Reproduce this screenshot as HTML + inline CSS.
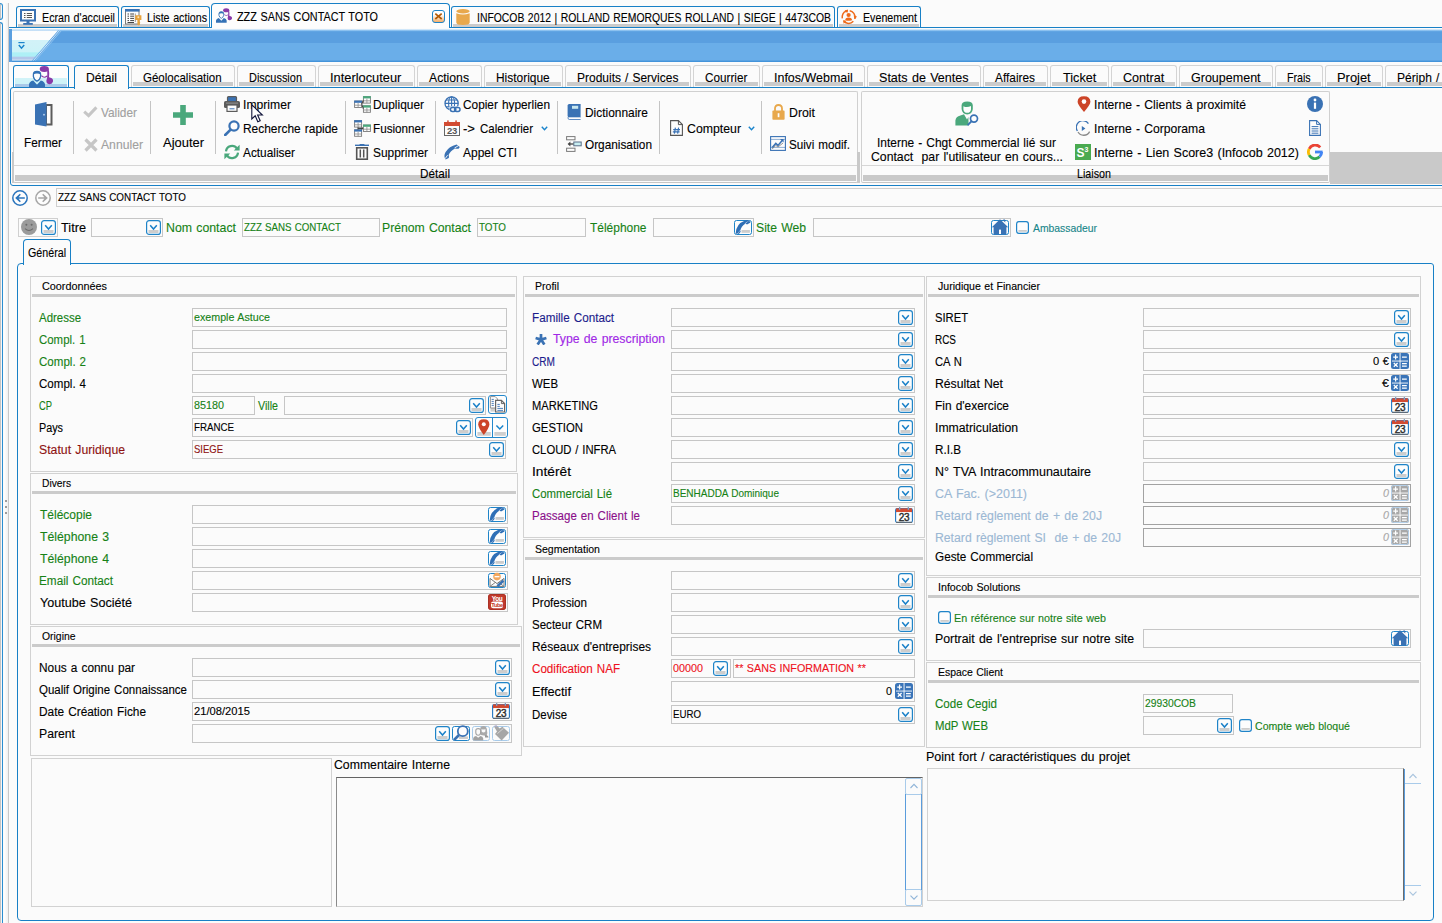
<!DOCTYPE html>
<html><head><meta charset="utf-8"><title>Infocob CRM</title>
<style>
html,body{margin:0;padding:0;overflow:hidden;}
html{width:1442px;height:923px;}
body{width:1442px;height:923px;overflow:hidden;background:#fbfbfb;position:relative;font-family:"Liberation Sans",sans-serif;}
body div,body span.t,body svg{position:absolute;box-sizing:border-box;}
span.t{white-space:pre;transform-origin:0 50%;-webkit-text-stroke:0.12px currentColor;}
.f{border:1px solid #c6c6c6;background:#fbfbfb;}
.fd{border:1px solid #a2a2a2;background:#fbfbfb;}
.g{border:1px solid #d2d2d2;}
.gb{background:#cbcbcb;height:3px;}
.dd{width:15px;height:15px;border:1px solid #2488cc;border-radius:3px;background:#fdfdfd;}
</style></head><body><div id="app" style="left:0;top:0;width:1442px;height:923px;overflow:hidden">
<div style="left:0px;top:3px;width:3px;height:17px;border:1px solid #2a8dd0;border-left:none;border-radius:0 3px 3px 0;background:linear-gradient(90deg,#c4c4c4 0,#c4c4c4 1px,#f4f6f8 1px);"></div>
<div style="left:0px;top:22px;width:3px;height:901px;border:1px solid #2a8dd0;border-left:none;border-bottom:none;border-radius:0 3px 0 0;background:linear-gradient(90deg,#c4c4c4 0,#c4c4c4 1px,#f4f6f8 1px);"></div>
<div style="left:4px;top:3px;width:5px;height:920px;background:linear-gradient(90deg,#ffffff,#f0f0f0);border-right:1px solid #c8c8c8;"></div>
<div style="left:5px;top:500px;width:2px;height:2px;background:#9c9c9c;"></div>
<div style="left:5px;top:506px;width:2px;height:2px;background:#9c9c9c;"></div>
<div style="left:5px;top:512px;width:2px;height:2px;background:#9c9c9c;"></div>
<div style="left:9px;top:27px;width:1433px;height:1px;background:#1880c6;"></div>
<div style="left:16px;top:6px;width:103px;height:21px;border:1px solid #1880c6;border-bottom:none;border-radius:3px 3px 0 0;background:#fbfbfb;"></div>
<div style="left:18px;top:24px;width:99px;height:3px;background:#cbcbcb;"></div>
<div style="left:121px;top:6px;width:89px;height:21px;border:1px solid #1880c6;border-bottom:none;border-radius:3px 3px 0 0;background:#fbfbfb;"></div>
<div style="left:123px;top:24px;width:85px;height:3px;background:#cbcbcb;"></div>
<div style="left:451px;top:6px;width:384px;height:21px;border:1px solid #1880c6;border-bottom:none;border-radius:3px 3px 0 0;background:#fbfbfb;"></div>
<div style="left:453px;top:24px;width:380px;height:3px;background:#cbcbcb;"></div>
<div style="left:837px;top:6px;width:84px;height:21px;border:1px solid #1880c6;border-bottom:none;border-radius:3px 3px 0 0;background:#fbfbfb;"></div>
<div style="left:839px;top:24px;width:80px;height:3px;background:#cbcbcb;"></div>
<div style="left:211px;top:3px;width:239px;height:25px;border:1px solid #1880c6;border-bottom:none;border-radius:4px 4px 0 0;background:#fdfdfd;"></div>
<span class="t" style="left:42px;top:8.5px;font-size:13px;line-height:17px;color:#000;transform:scaleX(0.8241);word-spacing:0.8px;">Ecran d'accueil</span>
<span class="t" style="left:147px;top:8.5px;font-size:13px;line-height:17px;color:#000;transform:scaleX(0.8210);word-spacing:0.8px;">Liste actions</span>
<span class="t" style="left:237px;top:7.5px;font-size:13px;line-height:17px;color:#000;transform:scaleX(0.8320);word-spacing:0.8px;">ZZZ SANS CONTACT TOTO</span>
<span class="t" style="left:477px;top:8.5px;font-size:13px;line-height:17px;color:#000;transform:scaleX(0.7993);word-spacing:0.8px;">INFOCOB 2012 | ROLLAND REMORQUES ROLLAND | SIEGE | 4473COB</span>
<span class="t" style="left:863px;top:8.5px;font-size:13px;line-height:17px;color:#000;transform:scaleX(0.8209);word-spacing:0.8px;">Evenement</span>
<div style="left:9px;top:29px;width:1433px;height:33px;background:linear-gradient(180deg,#eaf5fd 0px,#b4d8f6 1px,#84bdee 1.6px,#62a6e4 2.4px,#5a9fe0 3px,#5a9fe0 13.5px,#6aaee9 14.5px,#6aaee9 31px,#4a98dc 32px,#3d8fd8 33px);"></div>
<svg style="left:9px;top:29px" width="60" height="33" viewBox="0 0 60 33"><defs><linearGradient id="bt" x1="0" y1="0" x2="0" y2="1"><stop offset="0" stop-color="#fdfdfd"/><stop offset="0.3" stop-color="#fdfdfd"/><stop offset="0.32" stop-color="#d2f2f8"/><stop offset="0.72" stop-color="#cdf3f8"/><stop offset="0.74" stop-color="#aef0f6"/><stop offset="0.86" stop-color="#aef0f6"/><stop offset="0.88" stop-color="#b4c8ea"/><stop offset="0.95" stop-color="#b4c8ea"/><stop offset="1" stop-color="#e4f0fa"/></linearGradient></defs><rect x="0" y="0" width="3" height="33" fill="#5a9fe0"/><path d="M3 1.5 H49 L23 31.5 H3 Z" fill="url(#bt)"/><path d="M50.5 1.5 L24.5 31.5" stroke="#cfe6f8" stroke-width="1" fill="none"/><path d="M52.5 1.5 L26.5 31.5" stroke="#8ec2ee" stroke-width="1" fill="none"/></svg>
<div style="left:131px;top:65px;width:104px;height:24px;border:1px solid #d4d4d4;border-bottom:none;border-radius:3px 3px 0 0;"></div>
<div style="left:133px;top:82px;width:100px;height:4px;background:#cbcbcb;"></div>
<span class="t" style="left:142.8px;top:68.5px;font-size:13px;line-height:17px;color:#000;transform:scaleX(0.8850);word-spacing:0.8px;">Géolocalisation</span>
<div style="left:237px;top:65px;width:79px;height:24px;border:1px solid #d4d4d4;border-bottom:none;border-radius:3px 3px 0 0;"></div>
<div style="left:239px;top:82px;width:75px;height:4px;background:#cbcbcb;"></div>
<span class="t" style="left:249px;top:68.5px;font-size:13px;line-height:17px;color:#000;transform:scaleX(0.8429);word-spacing:0.8px;">Discussion</span>
<div style="left:318px;top:65px;width:97px;height:24px;border:1px solid #d4d4d4;border-bottom:none;border-radius:3px 3px 0 0;"></div>
<div style="left:320px;top:82px;width:93px;height:4px;background:#cbcbcb;"></div>
<span class="t" style="left:330.3px;top:68.5px;font-size:13px;line-height:17px;color:#000;transform:scaleX(0.9878);word-spacing:0.8px;">Interlocuteur</span>
<div style="left:417px;top:65px;width:65px;height:24px;border:1px solid #d4d4d4;border-bottom:none;border-radius:3px 3px 0 0;"></div>
<div style="left:419px;top:82px;width:61px;height:4px;background:#cbcbcb;"></div>
<span class="t" style="left:429.2px;top:68.5px;font-size:13px;line-height:17px;color:#000;transform:scaleX(0.9381);word-spacing:0.8px;">Actions</span>
<div style="left:484px;top:65px;width:79px;height:24px;border:1px solid #d4d4d4;border-bottom:none;border-radius:3px 3px 0 0;"></div>
<div style="left:486px;top:82px;width:75px;height:4px;background:#cbcbcb;"></div>
<span class="t" style="left:495.9px;top:68.5px;font-size:13px;line-height:17px;color:#000;transform:scaleX(0.9172);word-spacing:0.8px;">Historique</span>
<div style="left:565px;top:65px;width:126px;height:24px;border:1px solid #d4d4d4;border-bottom:none;border-radius:3px 3px 0 0;"></div>
<div style="left:567px;top:82px;width:122px;height:4px;background:#cbcbcb;"></div>
<span class="t" style="left:576.7px;top:68.5px;font-size:13px;line-height:17px;color:#000;transform:scaleX(0.9219);word-spacing:0.8px;">Produits / Services</span>
<div style="left:693px;top:65px;width:67px;height:24px;border:1px solid #d4d4d4;border-bottom:none;border-radius:3px 3px 0 0;"></div>
<div style="left:695px;top:82px;width:63px;height:4px;background:#cbcbcb;"></div>
<span class="t" style="left:704.9px;top:68.5px;font-size:13px;line-height:17px;color:#000;transform:scaleX(0.9027);word-spacing:0.8px;">Courrier</span>
<div style="left:762px;top:65px;width:103px;height:24px;border:1px solid #d4d4d4;border-bottom:none;border-radius:3px 3px 0 0;"></div>
<div style="left:764px;top:82px;width:99px;height:4px;background:#cbcbcb;"></div>
<span class="t" style="left:773.8px;top:68.5px;font-size:13px;line-height:17px;color:#000;transform:scaleX(0.9593);word-spacing:0.8px;">Infos/Webmail</span>
<div style="left:867px;top:65px;width:114px;height:24px;border:1px solid #d4d4d4;border-bottom:none;border-radius:3px 3px 0 0;"></div>
<div style="left:869px;top:82px;width:110px;height:4px;background:#cbcbcb;"></div>
<span class="t" style="left:878.8px;top:68.5px;font-size:13px;line-height:17px;color:#000;transform:scaleX(0.9668);word-spacing:0.8px;">Stats de Ventes</span>
<div style="left:983px;top:65px;width:65px;height:24px;border:1px solid #d4d4d4;border-bottom:none;border-radius:3px 3px 0 0;"></div>
<div style="left:985px;top:82px;width:61px;height:4px;background:#cbcbcb;"></div>
<span class="t" style="left:995px;top:68.5px;font-size:13px;line-height:17px;color:#000;transform:scaleX(0.9123);word-spacing:0.8px;">Affaires</span>
<div style="left:1050px;top:65px;width:59px;height:24px;border:1px solid #d4d4d4;border-bottom:none;border-radius:3px 3px 0 0;"></div>
<div style="left:1052px;top:82px;width:55px;height:4px;background:#cbcbcb;"></div>
<span class="t" style="left:1062.7px;top:68.5px;font-size:13px;line-height:17px;color:#000;transform:scaleX(0.9740);word-spacing:0.8px;">Ticket</span>
<div style="left:1111px;top:65px;width:66px;height:24px;border:1px solid #d4d4d4;border-bottom:none;border-radius:3px 3px 0 0;"></div>
<div style="left:1113px;top:82px;width:62px;height:4px;background:#cbcbcb;"></div>
<span class="t" style="left:1122.9px;top:68.5px;font-size:13px;line-height:17px;color:#000;transform:scaleX(0.9686);word-spacing:0.8px;">Contrat</span>
<div style="left:1179px;top:65px;width:94px;height:24px;border:1px solid #d4d4d4;border-bottom:none;border-radius:3px 3px 0 0;"></div>
<div style="left:1181px;top:82px;width:90px;height:4px;background:#cbcbcb;"></div>
<span class="t" style="left:1190.8px;top:68.5px;font-size:13px;line-height:17px;color:#000;transform:scaleX(0.9629);word-spacing:0.8px;">Groupement</span>
<div style="left:1275px;top:65px;width:48px;height:24px;border:1px solid #d4d4d4;border-bottom:none;border-radius:3px 3px 0 0;"></div>
<div style="left:1277px;top:82px;width:44px;height:4px;background:#cbcbcb;"></div>
<span class="t" style="left:1287px;top:68.5px;font-size:13px;line-height:17px;color:#000;transform:scaleX(0.8203);word-spacing:0.8px;">Frais</span>
<div style="left:1325px;top:65px;width:58px;height:24px;border:1px solid #d4d4d4;border-bottom:none;border-radius:3px 3px 0 0;"></div>
<div style="left:1327px;top:82px;width:54px;height:4px;background:#cbcbcb;"></div>
<span class="t" style="left:1336.6px;top:68.5px;font-size:13px;line-height:17px;color:#000;transform:scaleX(0.9921);word-spacing:0.8px;">Projet</span>
<div style="left:1385px;top:65px;width:76px;height:24px;border:1px solid #d4d4d4;border-bottom:none;border-radius:3px 3px 0 0;"></div>
<div style="left:1387px;top:82px;width:72px;height:4px;background:#cbcbcb;"></div>
<span class="t" style="left:1396.5px;top:68.5px;font-size:13px;line-height:17px;color:#000;transform:scaleX(0.9274);word-spacing:0.8px;">Périph /</span>
<div style="left:10px;top:87px;width:1440px;height:99px;border:1px solid #1880c6;border-radius:3px 0 0 3px;background:#fbfbfb;"></div>
<div style="left:13px;top:65px;width:56px;height:22px;border:1px solid #1880c6;border-bottom:none;border-radius:3px 3px 0 0;background:linear-gradient(180deg,#fdfdfd 0,#fdfdfd 12px,#d2f3f8 12px,#cdf3f8 17.5px,#aef0f6 18px,#a9c8e8 18.5px,#a9c8e8 20.5px,#fdfdfd 21px);box-shadow:inset 1px 1px 0 0 #fdfdfd,inset -1px 0 0 0 #fdfdfd;"></div>
<div style="left:74px;top:65px;width:55px;height:24px;border:1px solid #1880c6;border-bottom:none;border-radius:3px 3px 0 0;background:#fbfbfb;"></div>
<span class="t" style="left:86px;top:68.5px;font-size:13px;line-height:17px;color:#000;transform:scaleX(0.9323);word-spacing:0.8px;">Détail</span>
<div style="left:13px;top:91px;width:845px;height:92px;border:1px solid #d0d0d0;border-radius:2px;border-bottom-color:#c6c6c6;"></div>
<div style="left:861px;top:91px;width:469px;height:92px;border:1px solid #d0d0d0;border-radius:2px;border-bottom-color:#c6c6c6;"></div>
<div style="left:12px;top:152px;width:2px;height:31px;background:#c9c9c9;"></div>
<div style="left:857px;top:152px;width:3px;height:31px;background:#c9c9c9;"></div>
<div style="left:14px;top:165px;width:843px;height:1px;background:#d6d6d6;"></div>
<div style="left:862px;top:165px;width:467px;height:1px;background:#d6d6d6;"></div>
<div style="left:15px;top:175px;width:841px;height:6px;background:#c9c9c9;"></div>
<div style="left:863px;top:175px;width:465px;height:6px;background:#c9c9c9;"></div>
<div style="left:1330px;top:152px;width:112px;height:32px;background:#c9c9c9;"></div>
<span class="t" style="left:420px;top:164.5px;font-size:13px;line-height:17px;color:#000;transform:scaleX(0.9023);word-spacing:0.8px;">Détail</span>
<span class="t" style="left:1077px;top:164.5px;font-size:13px;line-height:17px;color:#000;transform:scaleX(0.8249);word-spacing:0.8px;">Liaison</span>
<div style="left:73px;top:101px;width:1px;height:53px;background:#c4c4c4;"></div>
<div style="left:150px;top:101px;width:1px;height:53px;background:#c4c4c4;"></div>
<div style="left:215px;top:101px;width:1px;height:53px;background:#c4c4c4;"></div>
<div style="left:345px;top:101px;width:1px;height:53px;background:#c4c4c4;"></div>
<div style="left:435px;top:101px;width:1px;height:53px;background:#c4c4c4;"></div>
<div style="left:557px;top:101px;width:1px;height:53px;background:#c4c4c4;"></div>
<div style="left:659px;top:101px;width:1px;height:53px;background:#c4c4c4;"></div>
<div style="left:761px;top:101px;width:1px;height:53px;background:#c4c4c4;"></div>
<span class="t" style="left:24px;top:133.5px;font-size:13px;line-height:17px;color:#000;transform:scaleX(0.9071);word-spacing:0.8px;">Fermer</span>
<span class="t" style="left:101px;top:103.5px;font-size:13px;line-height:17px;color:#a0a0a0;transform:scaleX(0.9110);word-spacing:0.8px;">Valider</span>
<span class="t" style="left:101px;top:135.5px;font-size:13px;line-height:17px;color:#a0a0a0;transform:scaleX(0.9369);word-spacing:0.8px;">Annuler</span>
<span class="t" style="left:163px;top:133.5px;font-size:13px;line-height:17px;color:#000;transform:scaleX(0.9951);word-spacing:0.8px;">Ajouter</span>
<span class="t" style="left:243px;top:95.5px;font-size:13px;line-height:17px;color:#000;transform:scaleX(0.9360);word-spacing:0.8px;">Imprimer</span>
<span class="t" style="left:243px;top:119.5px;font-size:13px;line-height:17px;color:#000;transform:scaleX(0.9183);word-spacing:0.8px;">Recherche rapide</span>
<span class="t" style="left:243px;top:143.5px;font-size:13px;line-height:17px;color:#000;transform:scaleX(0.9108);word-spacing:0.8px;">Actualiser</span>
<span class="t" style="left:373px;top:95.5px;font-size:13px;line-height:17px;color:#000;transform:scaleX(0.9161);word-spacing:0.8px;">Dupliquer</span>
<span class="t" style="left:373px;top:119.5px;font-size:13px;line-height:17px;color:#000;transform:scaleX(0.8992);word-spacing:0.8px;">Fusionner</span>
<span class="t" style="left:373px;top:143.5px;font-size:13px;line-height:17px;color:#000;transform:scaleX(0.9169);word-spacing:0.8px;">Supprimer</span>
<span class="t" style="left:463px;top:95.5px;font-size:13px;line-height:17px;color:#000;transform:scaleX(0.9110);word-spacing:0.8px;">Copier hyperlien</span>
<span class="t" style="left:463px;top:119.5px;font-size:13px;line-height:17px;color:#000;transform:scaleX(1.0066);word-spacing:0.8px;">-&gt;</span>
<span class="t" style="left:480.3px;top:119.5px;font-size:13px;line-height:17px;color:#000;transform:scaleX(0.8833);word-spacing:0.8px;">Calendrier</span>
<span class="t" style="left:463px;top:143.5px;font-size:13px;line-height:17px;color:#000;transform:scaleX(0.9213);word-spacing:0.8px;">Appel CTI</span>
<span class="t" style="left:585px;top:103.5px;font-size:13px;line-height:17px;color:#000;transform:scaleX(0.9174);word-spacing:0.8px;">Dictionnaire</span>
<span class="t" style="left:585px;top:135.5px;font-size:13px;line-height:17px;color:#000;transform:scaleX(0.9087);word-spacing:0.8px;">Organisation</span>
<span class="t" style="left:687px;top:119.5px;font-size:13px;line-height:17px;color:#000;transform:scaleX(0.9458);word-spacing:0.8px;">Compteur</span>
<span class="t" style="left:789px;top:103.5px;font-size:13px;line-height:17px;color:#000;transform:scaleX(0.9471);word-spacing:0.8px;">Droit</span>
<span class="t" style="left:789px;top:135.5px;font-size:13px;line-height:17px;color:#000;transform:scaleX(0.8970);word-spacing:0.8px;">Suivi modif.</span>
<span class="t" style="left:877px;top:133.5px;font-size:13px;line-height:17px;color:#000;transform:scaleX(0.9191);word-spacing:0.8px;">Interne - Chgt Commercial lié sur</span>
<span class="t" style="left:871px;top:147.5px;font-size:13px;line-height:17px;color:#000;transform:scaleX(0.9422);word-spacing:0.8px;">Contact  par l'utilisateur en cours...</span>
<span class="t" style="left:1094px;top:95.5px;font-size:13px;line-height:17px;color:#000;transform:scaleX(0.9372);word-spacing:0.8px;">Interne - Clients à proximité</span>
<span class="t" style="left:1094px;top:119.5px;font-size:13px;line-height:17px;color:#000;transform:scaleX(0.9353);word-spacing:0.8px;">Interne - Corporama</span>
<span class="t" style="left:1094px;top:143.5px;font-size:13px;line-height:17px;color:#000;transform:scaleX(0.9629);word-spacing:0.8px;">Interne - Lien Score3 (Infocob 2012)</span>
<svg style="left:541px;top:126px" width="7" height="5" viewBox="0 0 7 5"><path d="M0.8 0.8 L3.5 3.8 L6.2 0.8" fill="none" stroke="#1a84cc" stroke-width="1.4"/></svg>
<svg style="left:748px;top:126px" width="7" height="5" viewBox="0 0 7 5"><path d="M0.8 0.8 L3.5 3.8 L6.2 0.8" fill="none" stroke="#1a84cc" stroke-width="1.4"/></svg>
<div style="left:56px;top:188px;width:1390px;height:19px;border:1px solid #cfcfcf;"></div>
<span class="t" style="left:58px;top:189.5px;font-size:11px;line-height:15px;color:#000;transform:scaleX(0.8957);word-spacing:0.5px;">ZZZ SANS CONTACT TOTO</span>
<div style="left:18px;top:218px;width:40px;height:19px;border:1px solid #d0d0d0;"></div>
<svg style="left:41px;top:220px" width="15" height="15" viewBox="0 0 15 15"><rect x="0.6" y="0.6" width="13.8" height="13.8" rx="2.5" fill="#fdfdfd" stroke="#1f84c8" stroke-width="1.2"/><rect x="2.5" y="10" width="10" height="3" fill="#cdcdcd"/><path d="M4.2 5.2 L7.5 9 L10.8 5.2" fill="none" stroke="#1a80c8" stroke-width="1.5"/></svg>
<span class="t" style="left:61px;top:218.5px;font-size:13px;line-height:17px;color:#000;transform:scaleX(0.9798);word-spacing:0.8px;">Titre</span>
<div class="f" style="left:91px;top:218px;width:72px;height:19px;"></div>
<svg style="left:146px;top:220px" width="15" height="15" viewBox="0 0 15 15"><rect x="0.6" y="0.6" width="13.8" height="13.8" rx="2.5" fill="#fdfdfd" stroke="#1f84c8" stroke-width="1.2"/><rect x="2.5" y="10" width="10" height="3" fill="#cdcdcd"/><path d="M4.2 5.2 L7.5 9 L10.8 5.2" fill="none" stroke="#1a80c8" stroke-width="1.5"/></svg>
<span class="t" style="left:166px;top:218.5px;font-size:13px;line-height:17px;color:#168216;transform:scaleX(0.9487);word-spacing:0.8px;">Nom contact</span>
<div class="f" style="left:242px;top:218px;width:138px;height:19px"></div>
<span class="t" style="left:244px;top:219.5px;font-size:11px;line-height:15px;color:#168216;transform:scaleX(0.8851);word-spacing:0.5px;">ZZZ SANS CONTACT</span>
<span class="t" style="left:382px;top:218.5px;font-size:13px;line-height:17px;color:#168216;transform:scaleX(0.9393);word-spacing:0.8px;">Prénom Contact</span>
<div class="f" style="left:477px;top:218px;width:109px;height:19px"></div>
<span class="t" style="left:479px;top:219.5px;font-size:11px;line-height:15px;color:#168216;transform:scaleX(0.8953);word-spacing:0.5px;">TOTO</span>
<span class="t" style="left:590px;top:218.5px;font-size:13px;line-height:17px;color:#168216;transform:scaleX(0.9192);word-spacing:0.8px;">Téléphone</span>
<div class="f" style="left:653px;top:218px;width:101px;height:19px"></div>
<svg style="left:734px;top:219px" width="18" height="16" viewBox="0 0 18 16"><rect x="0.5" y="1.5" width="17" height="14" rx="2" fill="#fdfdfd" stroke="#1f84c8"/><rect x="7.5" y="11" width="8.4" height="2.8" fill="#cdcdcd"/><path d="M1.6 14.6 Q2 5 11 1.6 Q13.2 0.4 14.8 1.2 L16.6 3.4 L13 5.6 L11.6 4.6 Q7 7.4 6.2 12 L6.8 12.8 L4.6 15.2 Z" fill="#2f6fb6"/><path d="M10.8 4.8 L14.4 2" stroke="#fdfdfd" stroke-width="0.7" stroke-dasharray="1.2 0.6"/><path d="M3.4 15 L6 11.6" stroke="#fdfdfd" stroke-width="0.7" stroke-dasharray="1.2 0.6"/></svg>
<span class="t" style="left:756px;top:218.5px;font-size:13px;line-height:17px;color:#168216;transform:scaleX(0.9378);word-spacing:0.8px;">Site Web</span>
<div class="f" style="left:813px;top:218px;width:198px;height:19px"></div>
<svg style="left:991px;top:219px" width="18" height="16" viewBox="0 0 18 16"><rect x="0.5" y="1.5" width="17" height="14" rx="2" fill="#fdfdfd" stroke="#1f84c8"/><path d="M9 0.2 L0.8 8.2 H2.6 V15.4 H15.4 V8.2 H17.2 Z" fill="#3a72b4"/><path d="M12.2 0.4 H14 L14.4 3.6 L12.6 2 Z" fill="#3a72b4"/><rect x="8" y="10.6" width="2" height="4.4" fill="#fdfdfd"/></svg>
<svg style="left:1016px;top:221px" width="13" height="13" viewBox="0 0 13 13"><rect x="0.6" y="0.6" width="11.8" height="11.8" rx="2.3" fill="#fdfdfd" stroke="#1f84c8" stroke-width="1.2"/><rect x="2.4" y="9" width="8.4" height="1.8" fill="#cdcdcd"/></svg>
<span class="t" style="left:1033px;top:220.5px;font-size:11px;line-height:15px;color:#17868a;transform:scaleX(0.9425);word-spacing:0.5px;">Ambassadeur</span>
<div style="left:17px;top:263px;width:1417px;height:658px;border:1px solid #1880c6;border-radius:4px 3px 4px 4px;"></div>
<div style="left:23px;top:239px;width:48px;height:26px;border:1px solid #1880c6;border-bottom:none;border-radius:4px 4px 0 0;background:#fbfbfb;"></div>
<span class="t" style="left:28px;top:245.0px;font-size:12px;line-height:16px;color:#000;transform:scaleX(0.8902);word-spacing:0.8px;">Général</span>
<div class="g" style="left:30px;top:276px;width:487px;height:196px"></div>
<div class="gb" style="left:32px;top:294px;width:483px"></div>
<span class="t" style="left:42px;top:278.5px;font-size:11px;line-height:15px;color:#000;transform:scaleX(0.9835);word-spacing:0.5px;">Coordonnées</span>
<span class="t" style="left:39px;top:310.0px;font-size:12px;line-height:16px;color:#168216;transform:scaleX(0.9542);word-spacing:0.8px;">Adresse</span>
<span class="t" style="left:39px;top:332.0px;font-size:12px;line-height:16px;color:#168216;transform:scaleX(0.9526);word-spacing:0.8px;">Compl. 1</span>
<span class="t" style="left:39px;top:354.0px;font-size:12px;line-height:16px;color:#168216;transform:scaleX(0.9628);word-spacing:0.8px;">Compl. 2</span>
<span class="t" style="left:39px;top:376.0px;font-size:12px;line-height:16px;color:#000;transform:scaleX(0.9628);word-spacing:0.8px;">Compl. 4</span>
<span class="t" style="left:39px;top:398.0px;font-size:12px;line-height:16px;color:#168216;transform:scaleX(0.7798);word-spacing:0.8px;">CP</span>
<span class="t" style="left:39px;top:420.0px;font-size:12px;line-height:16px;color:#000;transform:scaleX(0.8998);word-spacing:0.8px;">Pays</span>
<span class="t" style="left:39px;top:442.0px;font-size:12px;line-height:16px;color:#8e1212;transform:scaleX(1.0219);word-spacing:0.8px;">Statut Juridique</span>
<div class="f" style="left:192px;top:308px;width:315px;height:19px"></div>
<div class="f" style="left:192px;top:330px;width:315px;height:19px"></div>
<div class="f" style="left:192px;top:352px;width:315px;height:19px"></div>
<div class="f" style="left:192px;top:374px;width:315px;height:19px"></div>
<span class="t" style="left:194px;top:309.5px;font-size:11px;line-height:15px;color:#168216;transform:scaleX(0.9718);word-spacing:0.5px;">exemple Astuce</span>
<div class="f" style="left:192px;top:396px;width:63px;height:19px"></div>
<span class="t" style="left:194px;top:397.5px;font-size:11px;line-height:15px;color:#168216;transform:scaleX(0.9796);word-spacing:0.5px;">85180</span>
<span class="t" style="left:257.5px;top:398.0px;font-size:12px;line-height:16px;color:#168216;transform:scaleX(0.8901);word-spacing:0.8px;">Ville</span>
<div class="f" style="left:284px;top:396px;width:202px;height:19px"></div>
<svg style="left:469px;top:398px" width="15" height="15" viewBox="0 0 15 15"><rect x="0.6" y="0.6" width="13.8" height="13.8" rx="2.5" fill="#fdfdfd" stroke="#1f84c8" stroke-width="1.2"/><rect x="2.5" y="10" width="10" height="3" fill="#cdcdcd"/><path d="M4.2 5.2 L7.5 9 L10.8 5.2" fill="none" stroke="#1a80c8" stroke-width="1.5"/></svg>
<div class="f" style="left:192px;top:418px;width:281px;height:19px"></div>
<span class="t" style="left:194px;top:419.5px;font-size:11px;line-height:15px;color:#000;transform:scaleX(0.8846);word-spacing:0.5px;">FRANCE</span>
<svg style="left:456px;top:420px" width="15" height="15" viewBox="0 0 15 15"><rect x="0.6" y="0.6" width="13.8" height="13.8" rx="2.5" fill="#fdfdfd" stroke="#1f84c8" stroke-width="1.2"/><rect x="2.5" y="10" width="10" height="3" fill="#cdcdcd"/><path d="M4.2 5.2 L7.5 9 L10.8 5.2" fill="none" stroke="#1a80c8" stroke-width="1.5"/></svg>
<div class="f" style="left:192px;top:440px;width:314px;height:19px"></div>
<span class="t" style="left:194px;top:441.5px;font-size:11px;line-height:15px;color:#8e1212;transform:scaleX(0.8617);word-spacing:0.5px;">SIEGE</span>
<svg style="left:489px;top:442px" width="15" height="15" viewBox="0 0 15 15"><rect x="0.6" y="0.6" width="13.8" height="13.8" rx="2.5" fill="#fdfdfd" stroke="#1f84c8" stroke-width="1.2"/><rect x="2.5" y="10" width="10" height="3" fill="#cdcdcd"/><path d="M4.2 5.2 L7.5 9 L10.8 5.2" fill="none" stroke="#1a80c8" stroke-width="1.5"/></svg>
<div class="g" style="left:30px;top:473px;width:488px;height:152px"></div>
<div class="gb" style="left:32px;top:491px;width:484px"></div>
<span class="t" style="left:42px;top:475.5px;font-size:11px;line-height:15px;color:#000;transform:scaleX(0.9308);word-spacing:0.5px;">Divers</span>
<span class="t" style="left:40px;top:507.0px;font-size:12px;line-height:16px;color:#168216;transform:scaleX(0.9994);word-spacing:0.8px;">Télécopie</span>
<div class="f" style="left:192px;top:505px;width:316px;height:19px"></div>
<span class="t" style="left:40px;top:529.0px;font-size:12px;line-height:16px;color:#168216;transform:scaleX(1.0222);word-spacing:0.8px;">Téléphone 3</span>
<div class="f" style="left:192px;top:527px;width:316px;height:19px"></div>
<span class="t" style="left:40px;top:551.0px;font-size:12px;line-height:16px;color:#168216;transform:scaleX(1.0222);word-spacing:0.8px;">Téléphone 4</span>
<div class="f" style="left:192px;top:549px;width:316px;height:19px"></div>
<span class="t" style="left:39.3px;top:573.0px;font-size:12px;line-height:16px;color:#168216;transform:scaleX(0.9803);word-spacing:0.8px;">Email Contact</span>
<div class="f" style="left:192px;top:571px;width:316px;height:19px"></div>
<span class="t" style="left:40px;top:595.0px;font-size:12px;line-height:16px;color:#000;transform:scaleX(1.0486);word-spacing:0.8px;">Youtube Société</span>
<div class="f" style="left:192px;top:593px;width:316px;height:19px"></div>
<svg style="left:488px;top:506px" width="18" height="16" viewBox="0 0 18 16"><rect x="0.5" y="1.5" width="17" height="14" rx="2" fill="#fdfdfd" stroke="#1f84c8"/><rect x="7.5" y="11" width="8.4" height="2.8" fill="#cdcdcd"/><path d="M1.6 14.6 Q2 5 11 1.6 Q13.2 0.4 14.8 1.2 L16.6 3.4 L13 5.6 L11.6 4.6 Q7 7.4 6.2 12 L6.8 12.8 L4.6 15.2 Z" fill="#2f6fb6"/><path d="M10.8 4.8 L14.4 2" stroke="#fdfdfd" stroke-width="0.7" stroke-dasharray="1.2 0.6"/><path d="M3.4 15 L6 11.6" stroke="#fdfdfd" stroke-width="0.7" stroke-dasharray="1.2 0.6"/></svg>
<svg style="left:488px;top:528px" width="18" height="16" viewBox="0 0 18 16"><rect x="0.5" y="1.5" width="17" height="14" rx="2" fill="#fdfdfd" stroke="#1f84c8"/><rect x="7.5" y="11" width="8.4" height="2.8" fill="#cdcdcd"/><path d="M1.6 14.6 Q2 5 11 1.6 Q13.2 0.4 14.8 1.2 L16.6 3.4 L13 5.6 L11.6 4.6 Q7 7.4 6.2 12 L6.8 12.8 L4.6 15.2 Z" fill="#2f6fb6"/><path d="M10.8 4.8 L14.4 2" stroke="#fdfdfd" stroke-width="0.7" stroke-dasharray="1.2 0.6"/><path d="M3.4 15 L6 11.6" stroke="#fdfdfd" stroke-width="0.7" stroke-dasharray="1.2 0.6"/></svg>
<svg style="left:488px;top:550px" width="18" height="16" viewBox="0 0 18 16"><rect x="0.5" y="1.5" width="17" height="14" rx="2" fill="#fdfdfd" stroke="#1f84c8"/><rect x="7.5" y="11" width="8.4" height="2.8" fill="#cdcdcd"/><path d="M1.6 14.6 Q2 5 11 1.6 Q13.2 0.4 14.8 1.2 L16.6 3.4 L13 5.6 L11.6 4.6 Q7 7.4 6.2 12 L6.8 12.8 L4.6 15.2 Z" fill="#2f6fb6"/><path d="M10.8 4.8 L14.4 2" stroke="#fdfdfd" stroke-width="0.7" stroke-dasharray="1.2 0.6"/><path d="M3.4 15 L6 11.6" stroke="#fdfdfd" stroke-width="0.7" stroke-dasharray="1.2 0.6"/></svg>
<div class="g" style="left:30px;top:626px;width:492px;height:130px"></div>
<div class="gb" style="left:32px;top:644px;width:488px"></div>
<span class="t" style="left:42px;top:628.5px;font-size:11px;line-height:15px;color:#000;transform:scaleX(0.9445);word-spacing:0.5px;">Origine</span>
<span class="t" style="left:39px;top:660.0px;font-size:12px;line-height:16px;color:#000;transform:scaleX(0.9886);word-spacing:0.8px;">Nous a connu par</span>
<div class="f" style="left:192px;top:658px;width:320px;height:19px"></div>
<span class="t" style="left:39px;top:682.0px;font-size:12px;line-height:16px;color:#000;transform:scaleX(0.9590);word-spacing:0.8px;">Qualif Origine Connaissance</span>
<div class="f" style="left:192px;top:680px;width:320px;height:19px"></div>
<span class="t" style="left:39px;top:704.0px;font-size:12px;line-height:16px;color:#000;transform:scaleX(0.9880);word-spacing:0.8px;">Date Création Fiche</span>
<div class="f" style="left:192px;top:702px;width:320px;height:19px"></div>
<span class="t" style="left:39px;top:726.0px;font-size:12px;line-height:16px;color:#000;transform:scaleX(1.0186);word-spacing:0.8px;">Parent</span>
<div class="f" style="left:192px;top:724px;width:320px;height:19px"></div>
<svg style="left:495px;top:660px" width="15" height="15" viewBox="0 0 15 15"><rect x="0.6" y="0.6" width="13.8" height="13.8" rx="2.5" fill="#fdfdfd" stroke="#1f84c8" stroke-width="1.2"/><rect x="2.5" y="10" width="10" height="3" fill="#cdcdcd"/><path d="M4.2 5.2 L7.5 9 L10.8 5.2" fill="none" stroke="#1a80c8" stroke-width="1.5"/></svg>
<svg style="left:495px;top:682px" width="15" height="15" viewBox="0 0 15 15"><rect x="0.6" y="0.6" width="13.8" height="13.8" rx="2.5" fill="#fdfdfd" stroke="#1f84c8" stroke-width="1.2"/><rect x="2.5" y="10" width="10" height="3" fill="#cdcdcd"/><path d="M4.2 5.2 L7.5 9 L10.8 5.2" fill="none" stroke="#1a80c8" stroke-width="1.5"/></svg>
<span class="t" style="left:194px;top:703.5px;font-size:11px;line-height:15px;color:#000;transform:scaleX(1.0159);word-spacing:0.5px;">21/08/2015</span>
<svg style="left:492px;top:703px" width="18" height="16" viewBox="0 0 18 16"><rect x="0.7" y="1.7" width="16.6" height="13.6" rx="1.5" fill="#fdfdfd" stroke="#2b7cc4" stroke-width="1.4"/><rect x="1" y="1.4" width="16" height="3.8" fill="#d24b32"/><rect x="4" y="0" width="1.3" height="3" fill="#7f9fc4"/><rect x="12.7" y="0" width="1.3" height="3" fill="#7f9fc4"/><rect x="1.4" y="5.2" width="15.2" height="9.6" fill="#fdfdfd"/><rect x="1" y="14.8" width="16" height="1" fill="#666"/><text x="9" y="14" font-family="Liberation Sans" font-size="10" fill="#2c2c2c" stroke="#2c2c2c" stroke-width="0.4" text-anchor="middle" letter-spacing="-0.3">23</text></svg>
<svg style="left:435px;top:726px" width="15" height="15" viewBox="0 0 15 15"><rect x="0.6" y="0.6" width="13.8" height="13.8" rx="2.5" fill="#fdfdfd" stroke="#1f84c8" stroke-width="1.2"/><rect x="2.5" y="10" width="10" height="3" fill="#cdcdcd"/><path d="M4.2 5.2 L7.5 9 L10.8 5.2" fill="none" stroke="#1a80c8" stroke-width="1.5"/></svg>
<div style="left:31px;top:758px;width:301px;height:149px;border:1px solid #d2d2d2;"></div>
<span class="t" style="left:334px;top:757.0px;font-size:12px;line-height:16px;color:#000;transform:scaleX(1.0220);word-spacing:0.8px;">Commentaire Interne</span>
<div style="left:336px;top:777px;width:587px;height:130px;border:1px solid #d2d2d2;border-top:1px solid #646464;border-left:1px solid #8a8a8a;"></div>
<div class="g" style="left:523px;top:276px;width:402px;height:262px"></div>
<div class="gb" style="left:525px;top:294px;width:398px"></div>
<span class="t" style="left:535px;top:278.5px;font-size:11px;line-height:15px;color:#000;transform:scaleX(0.9576);word-spacing:0.5px;">Profil</span>
<span class="t" style="left:532px;top:310.0px;font-size:12px;line-height:16px;color:#1c1c8c;transform:scaleX(0.9743);word-spacing:0.8px;">Famille Contact</span>
<div class="f" style="left:671px;top:308px;width:244px;height:19px"></div>
<svg style="left:898px;top:310px" width="15" height="15" viewBox="0 0 15 15"><rect x="0.6" y="0.6" width="13.8" height="13.8" rx="2.5" fill="#fdfdfd" stroke="#1f84c8" stroke-width="1.2"/><rect x="2.5" y="10" width="10" height="3" fill="#cdcdcd"/><path d="M4.2 5.2 L7.5 9 L10.8 5.2" fill="none" stroke="#1a80c8" stroke-width="1.5"/></svg>
<span class="t" style="left:553px;top:331.0px;font-size:12px;line-height:16px;color:#a028e6;transform:scaleX(1.0215);word-spacing:0.8px;">Type de prescription</span>
<div class="f" style="left:671px;top:330px;width:244px;height:19px"></div>
<svg style="left:898px;top:332px" width="15" height="15" viewBox="0 0 15 15"><rect x="0.6" y="0.6" width="13.8" height="13.8" rx="2.5" fill="#fdfdfd" stroke="#1f84c8" stroke-width="1.2"/><rect x="2.5" y="10" width="10" height="3" fill="#cdcdcd"/><path d="M4.2 5.2 L7.5 9 L10.8 5.2" fill="none" stroke="#1a80c8" stroke-width="1.5"/></svg>
<span class="t" style="left:532px;top:354.0px;font-size:12px;line-height:16px;color:#1c1c8c;transform:scaleX(0.8411);word-spacing:0.8px;">CRM</span>
<div class="f" style="left:671px;top:352px;width:244px;height:19px"></div>
<svg style="left:898px;top:354px" width="15" height="15" viewBox="0 0 15 15"><rect x="0.6" y="0.6" width="13.8" height="13.8" rx="2.5" fill="#fdfdfd" stroke="#1f84c8" stroke-width="1.2"/><rect x="2.5" y="10" width="10" height="3" fill="#cdcdcd"/><path d="M4.2 5.2 L7.5 9 L10.8 5.2" fill="none" stroke="#1a80c8" stroke-width="1.5"/></svg>
<span class="t" style="left:532px;top:376.0px;font-size:12px;line-height:16px;color:#000;transform:scaleX(0.9514);word-spacing:0.8px;">WEB</span>
<div class="f" style="left:671px;top:374px;width:244px;height:19px"></div>
<svg style="left:898px;top:376px" width="15" height="15" viewBox="0 0 15 15"><rect x="0.6" y="0.6" width="13.8" height="13.8" rx="2.5" fill="#fdfdfd" stroke="#1f84c8" stroke-width="1.2"/><rect x="2.5" y="10" width="10" height="3" fill="#cdcdcd"/><path d="M4.2 5.2 L7.5 9 L10.8 5.2" fill="none" stroke="#1a80c8" stroke-width="1.5"/></svg>
<span class="t" style="left:532px;top:398.0px;font-size:12px;line-height:16px;color:#000;transform:scaleX(0.9253);word-spacing:0.8px;">MARKETING</span>
<div class="f" style="left:671px;top:396px;width:244px;height:19px"></div>
<svg style="left:898px;top:398px" width="15" height="15" viewBox="0 0 15 15"><rect x="0.6" y="0.6" width="13.8" height="13.8" rx="2.5" fill="#fdfdfd" stroke="#1f84c8" stroke-width="1.2"/><rect x="2.5" y="10" width="10" height="3" fill="#cdcdcd"/><path d="M4.2 5.2 L7.5 9 L10.8 5.2" fill="none" stroke="#1a80c8" stroke-width="1.5"/></svg>
<span class="t" style="left:532px;top:420.0px;font-size:12px;line-height:16px;color:#000;transform:scaleX(0.9447);word-spacing:0.8px;">GESTION</span>
<div class="f" style="left:671px;top:418px;width:244px;height:19px"></div>
<svg style="left:898px;top:420px" width="15" height="15" viewBox="0 0 15 15"><rect x="0.6" y="0.6" width="13.8" height="13.8" rx="2.5" fill="#fdfdfd" stroke="#1f84c8" stroke-width="1.2"/><rect x="2.5" y="10" width="10" height="3" fill="#cdcdcd"/><path d="M4.2 5.2 L7.5 9 L10.8 5.2" fill="none" stroke="#1a80c8" stroke-width="1.5"/></svg>
<span class="t" style="left:532px;top:442.0px;font-size:12px;line-height:16px;color:#000;transform:scaleX(0.9375);word-spacing:0.8px;">CLOUD / INFRA</span>
<div class="f" style="left:671px;top:440px;width:244px;height:19px"></div>
<svg style="left:898px;top:442px" width="15" height="15" viewBox="0 0 15 15"><rect x="0.6" y="0.6" width="13.8" height="13.8" rx="2.5" fill="#fdfdfd" stroke="#1f84c8" stroke-width="1.2"/><rect x="2.5" y="10" width="10" height="3" fill="#cdcdcd"/><path d="M4.2 5.2 L7.5 9 L10.8 5.2" fill="none" stroke="#1a80c8" stroke-width="1.5"/></svg>
<span class="t" style="left:532px;top:464.0px;font-size:12px;line-height:16px;color:#000;transform:scaleX(1.1471);word-spacing:0.8px;">Intérêt</span>
<div class="f" style="left:671px;top:462px;width:244px;height:19px"></div>
<svg style="left:898px;top:464px" width="15" height="15" viewBox="0 0 15 15"><rect x="0.6" y="0.6" width="13.8" height="13.8" rx="2.5" fill="#fdfdfd" stroke="#1f84c8" stroke-width="1.2"/><rect x="2.5" y="10" width="10" height="3" fill="#cdcdcd"/><path d="M4.2 5.2 L7.5 9 L10.8 5.2" fill="none" stroke="#1a80c8" stroke-width="1.5"/></svg>
<span class="t" style="left:532px;top:486.0px;font-size:12px;line-height:16px;color:#168216;transform:scaleX(0.9504);word-spacing:0.8px;">Commercial Lié</span>
<div class="f" style="left:671px;top:484px;width:244px;height:19px"></div>
<svg style="left:898px;top:486px" width="15" height="15" viewBox="0 0 15 15"><rect x="0.6" y="0.6" width="13.8" height="13.8" rx="2.5" fill="#fdfdfd" stroke="#1f84c8" stroke-width="1.2"/><rect x="2.5" y="10" width="10" height="3" fill="#cdcdcd"/><path d="M4.2 5.2 L7.5 9 L10.8 5.2" fill="none" stroke="#1a80c8" stroke-width="1.5"/></svg>
<span class="t" style="left:532px;top:508.0px;font-size:12px;line-height:16px;color:#8a0e8a;transform:scaleX(0.9605);word-spacing:0.8px;">Passage en Client le</span>
<div class="f" style="left:671px;top:506px;width:244px;height:19px"></div>
<svg style="left:895px;top:507px" width="18" height="16" viewBox="0 0 18 16"><rect x="0.7" y="1.7" width="16.6" height="13.6" rx="1.5" fill="#fdfdfd" stroke="#2b7cc4" stroke-width="1.4"/><rect x="1" y="1.4" width="16" height="3.8" fill="#d24b32"/><rect x="4" y="0" width="1.3" height="3" fill="#7f9fc4"/><rect x="12.7" y="0" width="1.3" height="3" fill="#7f9fc4"/><rect x="1.4" y="5.2" width="15.2" height="9.6" fill="#fdfdfd"/><rect x="1" y="14.8" width="16" height="1" fill="#666"/><text x="9" y="14" font-family="Liberation Sans" font-size="10" fill="#2c2c2c" stroke="#2c2c2c" stroke-width="0.4" text-anchor="middle" letter-spacing="-0.3">23</text></svg>
<span class="t" style="left:673px;top:485.5px;font-size:11px;line-height:15px;color:#168216;transform:scaleX(0.9085);word-spacing:0.5px;">BENHADDA Dominique</span>
<div class="g" style="left:523px;top:539px;width:402px;height:208px"></div>
<div class="gb" style="left:525px;top:557px;width:398px"></div>
<span class="t" style="left:535px;top:541.5px;font-size:11px;line-height:15px;color:#000;transform:scaleX(0.9568);word-spacing:0.5px;">Segmentation</span>
<span class="t" style="left:532px;top:573.0px;font-size:12px;line-height:16px;color:#000;transform:scaleX(0.9585);word-spacing:0.8px;">Univers</span>
<span class="t" style="left:532px;top:595.0px;font-size:12px;line-height:16px;color:#000;transform:scaleX(0.9702);word-spacing:0.8px;">Profession</span>
<span class="t" style="left:532px;top:617.0px;font-size:12px;line-height:16px;color:#000;transform:scaleX(0.9613);word-spacing:0.8px;">Secteur CRM</span>
<span class="t" style="left:532px;top:639.0px;font-size:12px;line-height:16px;color:#000;transform:scaleX(0.9932);word-spacing:0.8px;">Réseaux d'entreprises</span>
<span class="t" style="left:532px;top:661.0px;font-size:12px;line-height:16px;color:#ee1020;transform:scaleX(0.9688);word-spacing:0.8px;">Codification NAF</span>
<span class="t" style="left:532px;top:684.0px;font-size:12px;line-height:16px;color:#000;transform:scaleX(1.0703);word-spacing:0.8px;">Effectif</span>
<span class="t" style="left:532px;top:707.0px;font-size:12px;line-height:16px;color:#000;transform:scaleX(0.9540);word-spacing:0.8px;">Devise</span>
<div class="f" style="left:671px;top:571px;width:244px;height:19px"></div>
<svg style="left:898px;top:573px" width="15" height="15" viewBox="0 0 15 15"><rect x="0.6" y="0.6" width="13.8" height="13.8" rx="2.5" fill="#fdfdfd" stroke="#1f84c8" stroke-width="1.2"/><rect x="2.5" y="10" width="10" height="3" fill="#cdcdcd"/><path d="M4.2 5.2 L7.5 9 L10.8 5.2" fill="none" stroke="#1a80c8" stroke-width="1.5"/></svg>
<div class="f" style="left:671px;top:593px;width:244px;height:19px"></div>
<svg style="left:898px;top:595px" width="15" height="15" viewBox="0 0 15 15"><rect x="0.6" y="0.6" width="13.8" height="13.8" rx="2.5" fill="#fdfdfd" stroke="#1f84c8" stroke-width="1.2"/><rect x="2.5" y="10" width="10" height="3" fill="#cdcdcd"/><path d="M4.2 5.2 L7.5 9 L10.8 5.2" fill="none" stroke="#1a80c8" stroke-width="1.5"/></svg>
<div class="f" style="left:671px;top:615px;width:244px;height:19px"></div>
<svg style="left:898px;top:617px" width="15" height="15" viewBox="0 0 15 15"><rect x="0.6" y="0.6" width="13.8" height="13.8" rx="2.5" fill="#fdfdfd" stroke="#1f84c8" stroke-width="1.2"/><rect x="2.5" y="10" width="10" height="3" fill="#cdcdcd"/><path d="M4.2 5.2 L7.5 9 L10.8 5.2" fill="none" stroke="#1a80c8" stroke-width="1.5"/></svg>
<div class="f" style="left:671px;top:637px;width:244px;height:19px"></div>
<svg style="left:898px;top:639px" width="15" height="15" viewBox="0 0 15 15"><rect x="0.6" y="0.6" width="13.8" height="13.8" rx="2.5" fill="#fdfdfd" stroke="#1f84c8" stroke-width="1.2"/><rect x="2.5" y="10" width="10" height="3" fill="#cdcdcd"/><path d="M4.2 5.2 L7.5 9 L10.8 5.2" fill="none" stroke="#1a80c8" stroke-width="1.5"/></svg>
<div class="f" style="left:671px;top:705px;width:244px;height:19px"></div>
<svg style="left:898px;top:707px" width="15" height="15" viewBox="0 0 15 15"><rect x="0.6" y="0.6" width="13.8" height="13.8" rx="2.5" fill="#fdfdfd" stroke="#1f84c8" stroke-width="1.2"/><rect x="2.5" y="10" width="10" height="3" fill="#cdcdcd"/><path d="M4.2 5.2 L7.5 9 L10.8 5.2" fill="none" stroke="#1a80c8" stroke-width="1.5"/></svg>
<div class="f" style="left:671px;top:659px;width:60px;height:19px"></div>
<span class="t" style="left:673px;top:660.5px;font-size:11px;line-height:15px;color:#ee1020;transform:scaleX(0.9796);word-spacing:0.5px;">00000</span>
<svg style="left:713px;top:661px" width="15" height="15" viewBox="0 0 15 15"><rect x="0.6" y="0.6" width="13.8" height="13.8" rx="2.5" fill="#fdfdfd" stroke="#1f84c8" stroke-width="1.2"/><rect x="2.5" y="10" width="10" height="3" fill="#cdcdcd"/><path d="M4.2 5.2 L7.5 9 L10.8 5.2" fill="none" stroke="#1a80c8" stroke-width="1.5"/></svg>
<div class="f" style="left:733px;top:659px;width:182px;height:19px"></div>
<span class="t" style="left:735px;top:660.5px;font-size:11px;line-height:15px;color:#ee1020;transform:scaleX(0.9778);word-spacing:0.5px;">** SANS INFORMATION **</span>
<div class="f" style="left:671px;top:681px;width:244px;height:21px"></div>
<span class="t" style="left:886px;top:683.5px;font-size:11px;line-height:15px;color:#000;transform:scaleX(0.9796);word-spacing:0.5px;">0</span>
<svg style="left:895px;top:683px" width="18" height="16" viewBox="0 0 18 16"><rect x="0" y="0" width="18" height="16" rx="2.5" fill="#3a74b8"/><rect x="8.6" y="0" width="0.9" height="16" fill="#fff"/><rect x="1" y="7.6" width="16" height="0.9" fill="#fff"/><path d="M2.2 4 H7 M4.6 1.6 V6.4 M11 4 H15.8 M11 10.6 H15.8 M11 13.2 H15.8 M2.8 10 L6.6 13.8 M6.6 10 L2.8 13.8" stroke="#fff" stroke-width="1.25" fill="none"/></svg>
<span class="t" style="left:673px;top:706.5px;font-size:11px;line-height:15px;color:#000;transform:scaleX(0.8810);word-spacing:0.5px;">EURO</span>
<div class="g" style="left:926px;top:276px;width:495px;height:300px"></div>
<div class="gb" style="left:928px;top:294px;width:491px"></div>
<span class="t" style="left:938px;top:278.5px;font-size:11px;line-height:15px;color:#000;transform:scaleX(0.9603);word-spacing:0.5px;">Juridique et Financier</span>
<span class="t" style="left:935px;top:310.0px;font-size:12px;line-height:16px;color:#000;transform:scaleX(0.9341);word-spacing:0.8px;">SIRET</span>
<div class="f" style="left:1143px;top:308px;width:268px;height:19px"></div>
<span class="t" style="left:935px;top:332.0px;font-size:12px;line-height:16px;color:#000;transform:scaleX(0.8286);word-spacing:0.8px;">RCS</span>
<div class="f" style="left:1143px;top:330px;width:268px;height:19px"></div>
<span class="t" style="left:935px;top:354.0px;font-size:12px;line-height:16px;color:#000;transform:scaleX(0.9370);word-spacing:0.8px;">CA N</span>
<div class="f" style="left:1143px;top:352px;width:268px;height:19px"></div>
<span class="t" style="left:935px;top:376.0px;font-size:12px;line-height:16px;color:#000;transform:scaleX(1.0177);word-spacing:0.8px;">Résultat Net</span>
<div class="f" style="left:1143px;top:374px;width:268px;height:19px"></div>
<span class="t" style="left:935px;top:398.0px;font-size:12px;line-height:16px;color:#000;transform:scaleX(0.9939);word-spacing:0.8px;">Fin d'exercice</span>
<div class="f" style="left:1143px;top:396px;width:268px;height:19px"></div>
<span class="t" style="left:935px;top:420.0px;font-size:12px;line-height:16px;color:#000;transform:scaleX(1.0202);word-spacing:0.8px;">Immatriculation</span>
<div class="f" style="left:1143px;top:418px;width:268px;height:19px"></div>
<span class="t" style="left:935px;top:442.0px;font-size:12px;line-height:16px;color:#000;transform:scaleX(0.9754);word-spacing:0.8px;">R.I.B</span>
<div class="f" style="left:1143px;top:440px;width:268px;height:19px"></div>
<span class="t" style="left:935px;top:464.0px;font-size:12px;line-height:16px;color:#000;transform:scaleX(1.0401);word-spacing:0.8px;">N° TVA Intracommunautaire</span>
<div class="f" style="left:1143px;top:462px;width:268px;height:19px"></div>
<span class="t" style="left:935px;top:486.0px;font-size:12px;line-height:16px;color:#9bb8d4;transform:scaleX(1.0406);word-spacing:0.8px;">CA Fac. (&gt;2011)</span>
<div class="fd" style="left:1143px;top:484px;width:268px;height:19px"></div>
<span class="t" style="left:935px;top:508.0px;font-size:12px;line-height:16px;color:#9bb8d4;transform:scaleX(1.0241);word-spacing:0.8px;">Retard règlement de + de 20J</span>
<div class="fd" style="left:1143px;top:506px;width:268px;height:19px"></div>
<span class="t" style="left:935px;top:530.0px;font-size:12px;line-height:16px;color:#9bb8d4;transform:scaleX(1.0184);word-spacing:0.8px;">Retard règlement SI  de + de 20J</span>
<div class="fd" style="left:1143px;top:528px;width:268px;height:19px"></div>
<span class="t" style="left:935px;top:549.0px;font-size:12px;line-height:16px;color:#000;transform:scaleX(0.9784);word-spacing:0.8px;">Geste Commercial</span>
<svg style="left:1394px;top:310px" width="15" height="15" viewBox="0 0 15 15"><rect x="0.6" y="0.6" width="13.8" height="13.8" rx="2.5" fill="#fdfdfd" stroke="#1f84c8" stroke-width="1.2"/><rect x="2.5" y="10" width="10" height="3" fill="#cdcdcd"/><path d="M4.2 5.2 L7.5 9 L10.8 5.2" fill="none" stroke="#1a80c8" stroke-width="1.5"/></svg>
<svg style="left:1394px;top:332px" width="15" height="15" viewBox="0 0 15 15"><rect x="0.6" y="0.6" width="13.8" height="13.8" rx="2.5" fill="#fdfdfd" stroke="#1f84c8" stroke-width="1.2"/><rect x="2.5" y="10" width="10" height="3" fill="#cdcdcd"/><path d="M4.2 5.2 L7.5 9 L10.8 5.2" fill="none" stroke="#1a80c8" stroke-width="1.5"/></svg>
<svg style="left:1394px;top:442px" width="15" height="15" viewBox="0 0 15 15"><rect x="0.6" y="0.6" width="13.8" height="13.8" rx="2.5" fill="#fdfdfd" stroke="#1f84c8" stroke-width="1.2"/><rect x="2.5" y="10" width="10" height="3" fill="#cdcdcd"/><path d="M4.2 5.2 L7.5 9 L10.8 5.2" fill="none" stroke="#1a80c8" stroke-width="1.5"/></svg>
<svg style="left:1394px;top:464px" width="15" height="15" viewBox="0 0 15 15"><rect x="0.6" y="0.6" width="13.8" height="13.8" rx="2.5" fill="#fdfdfd" stroke="#1f84c8" stroke-width="1.2"/><rect x="2.5" y="10" width="10" height="3" fill="#cdcdcd"/><path d="M4.2 5.2 L7.5 9 L10.8 5.2" fill="none" stroke="#1a80c8" stroke-width="1.5"/></svg>
<svg style="left:1391px;top:353px" width="18" height="16" viewBox="0 0 18 16"><rect x="0" y="0" width="18" height="16" rx="2.5" fill="#3a74b8"/><rect x="8.6" y="0" width="0.9" height="16" fill="#fff"/><rect x="1" y="7.6" width="16" height="0.9" fill="#fff"/><path d="M2.2 4 H7 M4.6 1.6 V6.4 M11 4 H15.8 M11 10.6 H15.8 M11 13.2 H15.8 M2.8 10 L6.6 13.8 M6.6 10 L2.8 13.8" stroke="#fff" stroke-width="1.25" fill="none"/></svg>
<svg style="left:1391px;top:375px" width="18" height="16" viewBox="0 0 18 16"><rect x="0" y="0" width="18" height="16" rx="2.5" fill="#3a74b8"/><rect x="8.6" y="0" width="0.9" height="16" fill="#fff"/><rect x="1" y="7.6" width="16" height="0.9" fill="#fff"/><path d="M2.2 4 H7 M4.6 1.6 V6.4 M11 4 H15.8 M11 10.6 H15.8 M11 13.2 H15.8 M2.8 10 L6.6 13.8 M6.6 10 L2.8 13.8" stroke="#fff" stroke-width="1.25" fill="none"/></svg>
<span class="t" style="left:1373px;top:353.5px;font-size:11px;line-height:15px;color:#000;transform:scaleX(1.0119);word-spacing:0.5px;">0 €</span>
<span class="t" style="left:1382px;top:375.5px;font-size:11px;line-height:15px;color:#000;transform:scaleX(1.1429);word-spacing:0.5px;">€</span>
<svg style="left:1391px;top:397px" width="18" height="16" viewBox="0 0 18 16"><rect x="0.7" y="1.7" width="16.6" height="13.6" rx="1.5" fill="#fdfdfd" stroke="#2b7cc4" stroke-width="1.4"/><rect x="1" y="1.4" width="16" height="3.8" fill="#d24b32"/><rect x="4" y="0" width="1.3" height="3" fill="#7f9fc4"/><rect x="12.7" y="0" width="1.3" height="3" fill="#7f9fc4"/><rect x="1.4" y="5.2" width="15.2" height="9.6" fill="#fdfdfd"/><rect x="1" y="14.8" width="16" height="1" fill="#666"/><text x="9" y="14" font-family="Liberation Sans" font-size="10" fill="#2c2c2c" stroke="#2c2c2c" stroke-width="0.4" text-anchor="middle" letter-spacing="-0.3">23</text></svg>
<svg style="left:1391px;top:419px" width="18" height="16" viewBox="0 0 18 16"><rect x="0.7" y="1.7" width="16.6" height="13.6" rx="1.5" fill="#fdfdfd" stroke="#2b7cc4" stroke-width="1.4"/><rect x="1" y="1.4" width="16" height="3.8" fill="#d24b32"/><rect x="4" y="0" width="1.3" height="3" fill="#7f9fc4"/><rect x="12.7" y="0" width="1.3" height="3" fill="#7f9fc4"/><rect x="1.4" y="5.2" width="15.2" height="9.6" fill="#fdfdfd"/><rect x="1" y="14.8" width="16" height="1" fill="#666"/><text x="9" y="14" font-family="Liberation Sans" font-size="10" fill="#2c2c2c" stroke="#2c2c2c" stroke-width="0.4" text-anchor="middle" letter-spacing="-0.3">23</text></svg>
<svg style="left:1391px;top:485px" width="18" height="16" viewBox="0 0 18 16"><rect x="0" y="0" width="18" height="16" rx="2.5" fill="#a8a8a8"/><rect x="8.6" y="0" width="0.9" height="16" fill="#fff"/><rect x="1" y="7.6" width="16" height="0.9" fill="#fff"/><path d="M2.2 4 H7 M4.6 1.6 V6.4 M11 4 H15.8 M11 10.6 H15.8 M11 13.2 H15.8 M2.8 10 L6.6 13.8 M6.6 10 L2.8 13.8" stroke="#fff" stroke-width="1.25" fill="none"/></svg>
<div style="left:1391px;top:485px;width:18px;height:16px;border:1px solid #b4d0ea;border-radius:2.5px;"></div>
<span class="t" style="left:1383px;top:485.5px;font-size:11px;line-height:15px;color:#a8a8a8;transform:scaleX(0.9796);word-spacing:0.5px;font-style:italic;">0</span>
<svg style="left:1391px;top:507px" width="18" height="16" viewBox="0 0 18 16"><rect x="0" y="0" width="18" height="16" rx="2.5" fill="#a8a8a8"/><rect x="8.6" y="0" width="0.9" height="16" fill="#fff"/><rect x="1" y="7.6" width="16" height="0.9" fill="#fff"/><path d="M2.2 4 H7 M4.6 1.6 V6.4 M11 4 H15.8 M11 10.6 H15.8 M11 13.2 H15.8 M2.8 10 L6.6 13.8 M6.6 10 L2.8 13.8" stroke="#fff" stroke-width="1.25" fill="none"/></svg>
<div style="left:1391px;top:507px;width:18px;height:16px;border:1px solid #b4d0ea;border-radius:2.5px;"></div>
<span class="t" style="left:1383px;top:507.5px;font-size:11px;line-height:15px;color:#a8a8a8;transform:scaleX(0.9796);word-spacing:0.5px;font-style:italic;">0</span>
<svg style="left:1391px;top:529px" width="18" height="16" viewBox="0 0 18 16"><rect x="0" y="0" width="18" height="16" rx="2.5" fill="#a8a8a8"/><rect x="8.6" y="0" width="0.9" height="16" fill="#fff"/><rect x="1" y="7.6" width="16" height="0.9" fill="#fff"/><path d="M2.2 4 H7 M4.6 1.6 V6.4 M11 4 H15.8 M11 10.6 H15.8 M11 13.2 H15.8 M2.8 10 L6.6 13.8 M6.6 10 L2.8 13.8" stroke="#fff" stroke-width="1.25" fill="none"/></svg>
<div style="left:1391px;top:529px;width:18px;height:16px;border:1px solid #b4d0ea;border-radius:2.5px;"></div>
<span class="t" style="left:1383px;top:529.5px;font-size:11px;line-height:15px;color:#a8a8a8;transform:scaleX(0.9796);word-spacing:0.5px;font-style:italic;">0</span>
<div class="g" style="left:926px;top:577px;width:495px;height:84px"></div>
<div class="gb" style="left:928px;top:595px;width:491px"></div>
<span class="t" style="left:938px;top:579.5px;font-size:11px;line-height:15px;color:#000;transform:scaleX(0.9709);word-spacing:0.5px;">Infocob Solutions</span>
<svg style="left:938px;top:611px" width="13" height="13" viewBox="0 0 13 13"><rect x="0.6" y="0.6" width="11.8" height="11.8" rx="2.3" fill="#fdfdfd" stroke="#1f84c8" stroke-width="1.2"/><rect x="2.4" y="9" width="8.4" height="1.8" fill="#cdcdcd"/></svg>
<span class="t" style="left:954px;top:610.5px;font-size:11px;line-height:15px;color:#168216;transform:scaleX(0.9777);word-spacing:0.5px;">En référence sur notre site web</span>
<span class="t" style="left:935px;top:631.0px;font-size:12px;line-height:16px;color:#000;transform:scaleX(1.0275);word-spacing:0.8px;">Portrait de l'entreprise sur notre site</span>
<div class="f" style="left:1143px;top:629px;width:268px;height:19px"></div>
<svg style="left:1391px;top:630px" width="18" height="16" viewBox="0 0 18 16"><rect x="0.5" y="1.5" width="17" height="14" rx="2" fill="#fdfdfd" stroke="#1f84c8"/><path d="M9 0.2 L0.8 8.2 H2.6 V15.4 H15.4 V8.2 H17.2 Z" fill="#3a72b4"/><path d="M12.2 0.4 H14 L14.4 3.6 L12.6 2 Z" fill="#3a72b4"/><rect x="8" y="10.6" width="2" height="4.4" fill="#fdfdfd"/></svg>
<div class="g" style="left:926px;top:662px;width:495px;height:86px"></div>
<div class="gb" style="left:928px;top:680px;width:491px"></div>
<span class="t" style="left:938px;top:664.5px;font-size:11px;line-height:15px;color:#000;transform:scaleX(0.9502);word-spacing:0.5px;">Espace Client</span>
<span class="t" style="left:935px;top:696.0px;font-size:12px;line-height:16px;color:#168216;transform:scaleX(0.9661);word-spacing:0.8px;">Code Cegid</span>
<span class="t" style="left:935px;top:718.0px;font-size:12px;line-height:16px;color:#168216;transform:scaleX(0.9480);word-spacing:0.8px;">MdP WEB</span>
<div class="f" style="left:1143px;top:694px;width:90px;height:19px"></div>
<span class="t" style="left:1145px;top:695.5px;font-size:11px;line-height:15px;color:#168216;transform:scaleX(0.9363);word-spacing:0.5px;">29930COB</span>
<div class="f" style="left:1143px;top:716px;width:91px;height:19px"></div>
<svg style="left:1217px;top:718px" width="15" height="15" viewBox="0 0 15 15"><rect x="0.6" y="0.6" width="13.8" height="13.8" rx="2.5" fill="#fdfdfd" stroke="#1f84c8" stroke-width="1.2"/><rect x="2.5" y="10" width="10" height="3" fill="#cdcdcd"/><path d="M4.2 5.2 L7.5 9 L10.8 5.2" fill="none" stroke="#1a80c8" stroke-width="1.5"/></svg>
<svg style="left:1239px;top:719px" width="13" height="13" viewBox="0 0 13 13"><rect x="0.6" y="0.6" width="11.8" height="11.8" rx="2.3" fill="#fdfdfd" stroke="#1f84c8" stroke-width="1.2"/><rect x="2.4" y="9" width="8.4" height="1.8" fill="#cdcdcd"/></svg>
<span class="t" style="left:1255px;top:718.5px;font-size:11px;line-height:15px;color:#168216;transform:scaleX(0.9605);word-spacing:0.5px;">Compte web bloqué</span>
<span class="t" style="left:926px;top:749.0px;font-size:12px;line-height:16px;color:#000;transform:scaleX(1.0407);word-spacing:0.8px;">Point fort / caractéristiques du projet</span>
<div style="left:927px;top:768px;width:477px;height:133px;border:1px solid #d2d2d2;border-right:1px solid #6a6a6a;"></div>
<div style="left:1404px;top:769px;width:1px;height:131px;background:#5a9cdc;"></div>
<div style="left:1405px;top:783px;width:16px;height:1px;background:#a9cbea;"></div>
<div style="left:1405px;top:885px;width:16px;height:1px;background:#a9cbea;"></div>
<svg style="left:1407px;top:771px" width="12" height="11" viewBox="0 0 12 11"><path d="M2.5 7 L6 3.4 L9.5 7" fill="none" stroke="#a9c4de" stroke-width="1.1"/></svg>
<svg style="left:1407px;top:888px" width="12" height="11" viewBox="0 0 12 11"><path d="M2.5 3.6 L6 7.2 L9.5 3.6" fill="none" stroke="#a9c4de" stroke-width="1.1"/></svg>
<div style="left:905px;top:778px;width:17px;height:17px;border:1px solid #a9cbea;border-radius:2px;"></div>
<div style="left:905px;top:889px;width:17px;height:17px;border:1px solid #a9cbea;border-radius:2px;"></div>
<div style="left:905px;top:794px;width:17px;height:96px;border-left:1px solid #5a9cdc;border-right:1px solid #5a9cdc;"></div>
<svg style="left:907.5px;top:781px" width="12" height="11" viewBox="0 0 12 11"><path d="M2.5 7 L6 3.4 L9.5 7" fill="none" stroke="#8fb4d8" stroke-width="1.1"/></svg>
<svg style="left:907.5px;top:892px" width="12" height="11" viewBox="0 0 12 11"><path d="M2.5 3.6 L6 7.2 L9.5 3.6" fill="none" stroke="#8fb4d8" stroke-width="1.1"/></svg>
<svg style="left:20px;top:9px" width="16" height="16" viewBox="0 0 16 16"><rect x="1" y="1" width="14" height="10.5" fill="#fdfdfd" stroke="#3a72b4" stroke-width="2"/><rect x="6.5" y="12" width="3" height="2" fill="#3a72b4"/><rect x="3.2" y="14" width="9.6" height="1.8" fill="#3a72b4"/><path d="M4 4.5 H5.5 M6.8 4.5 H12 M4 6.5 H5.5 M6.8 6.5 H12 M4 8.5 H5.5 M6.8 8.5 H12" stroke="#555" stroke-width="1"/></svg>
<svg style="left:125px;top:9px" width="17" height="17" viewBox="0 0 17 17"><rect x="0.5" y="0.5" width="13.5" height="14.5" fill="#fdfdfd" stroke="#7a7a7a"/><rect x="0" y="0" width="14.5" height="2.6" fill="#3a72b4"/><path d="M2.5 5 H4 M5.2 5 H9 M2.5 7.2 H4 M5.2 7.2 H9 M2.5 9.4 H4 M5.2 9.4 H9 M2.5 11.6 H4 M5.2 11.6 H9 M2.5 13.5 H9" stroke="#444" stroke-width="1"/><path d="M10.3 4.5 V13" stroke="#9a9a9a" stroke-width="1"/><path d="M10.2 6.2 H16.4 V11 H14.6 V13 L15.4 13.8 L14.6 14.6 L15.2 15.4 L13.6 16.6 L12.4 15.4 V11 H10.2 Z" fill="#e8a33d"/><circle cx="13.3" cy="8.3" r="1" fill="#fbe3b8"/></svg>
<svg style="left:216px;top:8px" width="16" height="15" viewBox="0 0 24 22"><ellipse cx="15.3" cy="3" rx="4.6" ry="3" fill="#8a3aa8"/><path d="M17.6 1.2 Q20.4 2.6 20.2 8 L20 11.2 Q24.6 12 24 15.6 Q23.4 18.4 20.2 18.2 Q17.2 17.6 17.4 14.6 Q18.6 12.4 18.2 5 Z" fill="#8a3aa8"/><path d="M12.4 9.6 Q15 12.6 18.2 10" fill="none" stroke="#8a3aa8" stroke-width="1.1"/><path d="M0 22 V18.4 Q0.4 15.6 4.2 14.6 L8 18.8 L11.8 14.6 Q15.6 15.6 16 18.4 V22 Z" fill="#3472b6"/><path d="M4.4 8.6 Q4.2 5.4 8 5.4 Q11.8 5.4 11.6 8.6 V10.6 Q10.8 14.2 8 15.2 Q5.2 14.2 4.4 10.6 Z" fill="#fdfdfd" stroke="#3472b6" stroke-width="1.3"/><path d="M4.2 8.4 Q4.2 5 8 5 Q11.8 5 11.8 8.4 Q8 6.6 4.2 8.4 Z" fill="#3472b6"/></svg>
<svg style="left:432px;top:10px" width="13" height="13" viewBox="0 0 13 13"><defs><linearGradient id="cg" x1="0" y1="0" x2="0" y2="1"><stop offset="0.35" stop-color="#fff"/><stop offset="1" stop-color="#f4a85c"/></linearGradient></defs><rect x="0.5" y="0.5" width="12" height="12" rx="2.5" fill="url(#cg)" stroke="#1f84c8"/><path d="M3.3 3.6 L9.7 9 M9.7 3.6 L3.3 9" stroke="#b45a05" stroke-width="1.7"/></svg>
<svg style="left:456px;top:9px" width="14" height="16" viewBox="0 0 14 16"><path d="M0.3 4.2 V13.5 Q0.3 16 7 16 Q13.7 16 13.7 13.5 V4.2 Q10 5.6 7 5.6 Q4 5.6 0.3 4.2 Z" fill="#e8a84c"/><ellipse cx="7" cy="2.2" rx="6.7" ry="2.2" fill="#e8a84c"/></svg>
<svg style="left:841px;top:9px" width="16" height="16" viewBox="0 0 16 16"><circle cx="7.6" cy="8" r="6.4" fill="none" stroke="#ee6a1a" stroke-width="1.5" stroke-dasharray="10.6 2.8" transform="rotate(-80 7.6 8)"/><path d="M12.6 6.6 L16 7.4 L13.8 10.2 Z" fill="#ee6a1a"/><path d="M3.6 1.6 L7 0.6 L6.2 4 Z" fill="#ee6a1a"/><path d="M2.2 11 L5.4 12 L2.6 14.8 Z" fill="#ee6a1a"/><circle cx="7.6" cy="6" r="2.1" fill="#ee6a1a"/><path d="M4.2 11.2 Q4.2 8.4 7.6 8.4 Q11 8.4 11 11.2 Q7.6 12.4 4.2 11.2 Z" fill="#ee6a1a"/></svg>
<svg style="left:18px;top:42px" width="7" height="8" viewBox="0 0 7 8"><path d="M0.4 0.6 H6.6" stroke="#1a84cc" stroke-width="1.2"/><path d="M0.8 3 L3.5 6.2 L6.2 3" fill="none" stroke="#1a84cc" stroke-width="1.5"/></svg>
<svg style="left:29px;top:66px" width="24" height="22" viewBox="0 0 24 22"><ellipse cx="15.3" cy="3" rx="4.6" ry="3" fill="#8a3aa8"/><path d="M17.6 1.2 Q20.4 2.6 20.2 8 L20 11.2 Q24.6 12 24 15.6 Q23.4 18.4 20.2 18.2 Q17.2 17.6 17.4 14.6 Q18.6 12.4 18.2 5 Z" fill="#8a3aa8"/><path d="M12.4 9.6 Q15 12.6 18.2 10" fill="none" stroke="#8a3aa8" stroke-width="1.1"/><path d="M0 22 V18.4 Q0.4 15.6 4.2 14.6 L8 18.8 L11.8 14.6 Q15.6 15.6 16 18.4 V22 Z" fill="#3472b6"/><path d="M4.4 8.6 Q4.2 5.4 8 5.4 Q11.8 5.4 11.6 8.6 V10.6 Q10.8 14.2 8 15.2 Q5.2 14.2 4.4 10.6 Z" fill="#fdfdfd" stroke="#3472b6" stroke-width="1.3"/><path d="M4.2 8.4 Q4.2 5 8 5 Q11.8 5 11.8 8.4 Q8 6.6 4.2 8.4 Z" fill="#3472b6"/></svg>
<svg style="left:35px;top:102px" width="18" height="25" viewBox="0 0 18 25"><rect x="11" y="3" width="5.5" height="19.5" fill="#fdfdfd" stroke="#5c5c5c" stroke-width="2"/><path d="M0 2.6 L11.5 0 V24.5 L0 22.6 Z" fill="#3a72b4"/><circle cx="9" cy="12.7" r="0.9" fill="#bcd4ee"/></svg>
<svg style="left:83px;top:106px" width="15" height="12" viewBox="0 0 15 12"><path d="M1.2 5.6 L5.6 9.6 L13.4 1.4" fill="none" stroke="#c6c6c6" stroke-width="3"/></svg>
<svg style="left:84px;top:138px" width="14" height="14" viewBox="0 0 14 14"><path d="M1.5 1.5 L12.5 12.5 M12.5 1.5 L1.5 12.5" fill="none" stroke="#c6c6c6" stroke-width="3.2"/></svg>
<svg style="left:173px;top:105px" width="20" height="20" viewBox="0 0 20 20"><path d="M10 0 V20 M0 10 H20" stroke="#4aa87c" stroke-width="5.6"/></svg>
<svg style="left:224px;top:96px" width="16" height="16" viewBox="0 0 16 16"><rect x="3.5" y="0.6" width="9" height="5" rx="1" fill="#3a72b4" stroke="#5c5c5c" stroke-width="1.2"/><rect x="0" y="5" width="16" height="7" rx="1.6" fill="#5c5c5c"/><rect x="3" y="9" width="10" height="6.4" fill="#fdfdfd" stroke="#5c5c5c" stroke-width="1.2"/><path d="M5.5 12.8 H10.5" stroke="#3a72b4" stroke-width="1"/><rect x="2" y="6.6" width="12" height="1" fill="#fdfdfd" opacity="0.35"/></svg>
<svg style="left:224px;top:120px" width="16" height="16" viewBox="0 0 16 16"><circle cx="10" cy="6" r="4.6" fill="#fdfdfd" stroke="#3a72b4" stroke-width="2.2"/><path d="M6.6 9.6 L1.2 15" stroke="#3a72b4" stroke-width="2.6" stroke-linecap="round"/></svg>
<svg style="left:224px;top:144px" width="16" height="16" viewBox="0 0 16 16"><path d="M2 7.4 A6 6 0 0 1 13 4.6" fill="none" stroke="#4aa87c" stroke-width="2.2"/><path d="M14 8.6 A6 6 0 0 1 3 11.4" fill="none" stroke="#4aa87c" stroke-width="2.2"/><path d="M15.6 0.8 V6.6 H9.8 Z" fill="#4aa87c"/><path d="M0.4 15.2 V9.4 H6.2 Z" fill="#4aa87c"/></svg>
<svg style="left:354px;top:96px" width="17" height="17" viewBox="0 0 17 17"><rect x="0.6" y="5" width="7" height="6.5" fill="#fdfdfd" stroke="#7a7a7a" stroke-width="0.9"/><rect x="0.19999999999999996" y="4.6" width="7.8" height="2.2" fill="#3a72b4"/><path d="M4.1 7 V11.5 M0.6 9.2 H7.6" stroke="#8a8a8a" stroke-width="0.8"/><rect x="9.4" y="0.6" width="7" height="6.5" fill="#fdfdfd" stroke="#7a7a7a" stroke-width="0.9"/><rect x="9.0" y="0.19999999999999996" width="7.8" height="2.2" fill="#4aa87c"/><path d="M12.9 2.6 V7.1 M9.4 4.8 H16.4" stroke="#8a8a8a" stroke-width="0.8"/><rect x="9.4" y="9.8" width="7" height="6.5" fill="#fdfdfd" stroke="#7a7a7a" stroke-width="0.9"/><rect x="9.0" y="9.4" width="7.8" height="2.2" fill="#4aa87c"/><path d="M12.9 11.8 V16.3 M9.4 14.0 H16.4" stroke="#8a8a8a" stroke-width="0.8"/><path d="M7.8 8 L9.3 4.2 M7.8 8.4 L9.3 12.6" stroke="#444" stroke-width="1.1"/></svg>
<svg style="left:354px;top:120px" width="17" height="17" viewBox="0 0 17 17"><rect x="0.6" y="0.6" width="7" height="6.5" fill="#fdfdfd" stroke="#7a7a7a" stroke-width="0.9"/><rect x="0.19999999999999996" y="0.19999999999999996" width="7.8" height="2.2" fill="#3a72b4"/><path d="M4.1 2.6 V7.1 M0.6 4.8 H7.6" stroke="#8a8a8a" stroke-width="0.8"/><rect x="0.6" y="9.8" width="7" height="6.5" fill="#fdfdfd" stroke="#7a7a7a" stroke-width="0.9"/><rect x="0.19999999999999996" y="9.4" width="7.8" height="2.2" fill="#3a72b4"/><path d="M4.1 11.8 V16.3 M0.6 14.0 H7.6" stroke="#8a8a8a" stroke-width="0.8"/><rect x="9.4" y="5" width="7" height="6.5" fill="#fdfdfd" stroke="#7a7a7a" stroke-width="0.9"/><rect x="9.0" y="4.6" width="7.8" height="2.2" fill="#4aa87c"/><path d="M12.9 7 V11.5 M9.4 9.2 H16.4" stroke="#8a8a8a" stroke-width="0.8"/><path d="M4 7.2 V8.4 H8.8 M4 9.6 V8.6" stroke="#444" stroke-width="1.1" fill="none"/><path d="M7.6 6.6 L9.4 8.4 L7.6 10.2 Z" fill="#444"/></svg>
<svg style="left:355px;top:144px" width="14" height="16" viewBox="0 0 14 16"><rect x="0" y="0.6" width="14" height="1.4" fill="#3a72b4"/><rect x="4.6" y="0" width="4.8" height="1.2" fill="#3a72b4"/><rect x="1.7" y="3.8" width="10.6" height="11.4" fill="#fdfdfd" stroke="#555" stroke-width="1.6"/><path d="M5.3 5.4 V13.6 M8.7 5.4 V13.6" stroke="#555" stroke-width="1.5"/></svg>
<svg style="left:444px;top:96px" width="17" height="17" viewBox="0 0 17 17"><circle cx="7.6" cy="7.4" r="6.6" fill="#fdfdfd" stroke="#3a72b4" stroke-width="1.3"/><ellipse cx="7.6" cy="7.4" rx="3" ry="6.6" fill="none" stroke="#3a72b4" stroke-width="1.1"/><path d="M1 7.4 H14.2 M7.6 0.8 V14 M2 4 H13.2 M2 10.8 H13.2" stroke="#3a72b4" stroke-width="1.1"/><rect x="5.4" y="10.4" width="11.6" height="6.6" fill="#fdfdfd"/><rect x="6.4" y="11.6" width="5.4" height="3.8" rx="1.9" fill="none" stroke="#3a72b4" stroke-width="1.5"/><rect x="10.6" y="11.6" width="5.4" height="3.8" rx="1.9" fill="none" stroke="#3a72b4" stroke-width="1.5"/></svg>
<svg style="left:444px;top:120px" width="16" height="16" viewBox="0 0 16 16"><rect x="0.5" y="2.5" width="15" height="13" fill="#fdfdfd" stroke="#666"/><rect x="0" y="2" width="16" height="4" fill="#d24b32"/><rect x="3.2" y="0.4" width="1.5" height="3.2" fill="#d24b32"/><rect x="11.3" y="0.4" width="1.5" height="3.2" fill="#d24b32"/><text x="8" y="14" font-family="Liberation Sans" font-size="9.5" font-weight="bold" fill="#555" text-anchor="middle" letter-spacing="-0.4">23</text></svg>
<svg style="left:444px;top:144px" width="16" height="16" viewBox="0 0 16 16"><path d="M1.6 15.6 Q-0.8 12 1.6 8 Q5 2.2 12.6 0.4 L15.8 3 L14.6 4.8 Q12.4 5 11.2 4.4 Q6.4 6.6 4.6 11 Q5.2 12.4 4.8 14 Z" fill="#3a72b4"/><path d="M10.5 4 L14.6 1.6" stroke="#fdfdfd" stroke-width="0.9"/><path d="M3.6 11.2 L1.2 14.6" stroke="#fdfdfd" stroke-width="0.9"/></svg>
<svg style="left:567px;top:104px" width="14" height="16" viewBox="0 0 14 16"><path d="M2.2 0 H13.6 V13.4 H2.2 Q0.6 13.4 0.6 11.8 V1.6 Q0.6 0 2.2 0 Z" fill="#3a72b4"/><rect x="5" y="1.8" width="6.2" height="3" fill="#c6e6ee"/><path d="M1 13.2 Q0.8 15.6 2.6 15.6 H13.6" fill="none" stroke="#3a72b4" stroke-width="0.9"/><rect x="1.8" y="13.6" width="11.6" height="1.4" fill="#fdfdfd"/></svg>
<svg style="left:566px;top:136px" width="16" height="16" viewBox="0 0 16 16"><rect x="0.6" y="0.6" width="8.4" height="3.2" fill="#fdfdfd" stroke="#7a7a7a" stroke-width="1"/><rect x="0.6" y="12.2" width="8.4" height="3.2" fill="#fdfdfd" stroke="#7a7a7a" stroke-width="1"/><rect x="7.8" y="6" width="7.4" height="3.8" fill="#c8eef2" stroke="#5a6e88" stroke-width="1"/><path d="M7.4 8 H3" stroke="#444" stroke-width="1.3"/><path d="M4.4 5.6 L1.6 8 L4.4 10.4 Z" fill="#444"/></svg>
<svg style="left:670px;top:120px" width="13" height="16" viewBox="0 0 13 16"><path d="M0.6 0.6 H8.4 L12.4 4.6 V15.4 H0.6 Z" fill="#fdfdfd" stroke="#555" stroke-width="1.1"/><path d="M8.4 0.6 V4.6 H12.4" fill="none" stroke="#555" stroke-width="1"/><path d="M5.4 7.6 L4.4 13.6 M8.6 7.6 L7.6 13.6 M3.2 9.6 H10 M2.8 11.8 H9.6" stroke="#3a72b4" stroke-width="1.2"/></svg>
<svg style="left:772px;top:104px" width="13" height="16" viewBox="0 0 13 16"><path d="M3 7 V4.6 Q3 1 6.5 1 Q10 1 10 4.6 V7" fill="none" stroke="#e8a84c" stroke-width="1.8"/><rect x="0.4" y="6.6" width="12.2" height="9.2" rx="0.8" fill="#e8a84c"/><rect x="5.7" y="9.2" width="1.7" height="4" fill="#fdfdfd"/></svg>
<svg style="left:770px;top:136px" width="16" height="15" viewBox="0 0 16 15"><rect x="0.6" y="0.6" width="14.8" height="13.8" fill="#fdfdfd" stroke="#3a72b4" stroke-width="1.1"/><path d="M1 3.4 H15 M1 11.4 H15" stroke="#3a72b4" stroke-width="0.8" opacity="0.7"/><path d="M2.2 11.6 L5.8 7.4 L8 9.4 L12.4 4.2" fill="none" stroke="#3a72b4" stroke-width="1.5"/><path d="M10 3 H13.6 V6.6 Z" fill="#3a72b4"/><path d="M2.2 13 L5.8 9.4 L8 11 L13 7" fill="none" stroke="#777" stroke-width="0.8"/></svg>
<svg style="left:955px;top:101px" width="24" height="25" viewBox="0 0 24 25"><path d="M6.6 4.6 Q6.6 0.6 12.2 0.6 Q17.8 0.6 17.8 4.6 V8 Q17.2 13.4 12.2 13.4 Q7.2 13.4 6.6 8 Z" fill="#4aa87c"/><path d="M8.4 5.2 Q12 7 16 5 V8.4 Q15.4 11.8 12.2 11.8 Q9 11.8 8.4 8.4 Z" fill="#fdfdfd"/><path d="M0.4 24.4 V19.6 Q0.8 15.4 5.4 14.4 L9 13.2 L12 18.6 L13.4 16 L13.6 24.4 Z" fill="#4aa87c"/><circle cx="19" cy="17.6" r="3.5" fill="#fdfdfd" stroke="#3a72b4" stroke-width="1.7"/><path d="M16.4 20.4 L13.2 23.6" stroke="#3a72b4" stroke-width="2" stroke-linecap="round"/></svg>
<svg style="left:1077px;top:96px" width="14" height="16" viewBox="0 0 14 16"><path d="M7 16 Q0.6 8.6 0.6 5.8 Q0.6 0.2 7 0.2 Q13.4 0.2 13.4 5.8 Q13.4 8.6 7 16 Z" fill="#cc4428"/><circle cx="7" cy="5.6" r="2.3" fill="#fdfdfd"/></svg>
<svg style="left:1076px;top:121px" width="15" height="15" viewBox="0 0 15 15"><path d="M13.6 10.6 A6.6 6.6 0 0 1 2 11" fill="none" stroke="#8a8a8a" stroke-width="1.3"/><path d="M1.4 10 A6.6 6.6 0 0 1 12.4 2.6" fill="none" stroke="#3a72b4" stroke-width="1.3"/><path d="M5.8 5 L9.4 7.5 L5.8 10 Z" fill="#3a72b4"/></svg>
<svg style="left:1075px;top:144px" width="16" height="16" viewBox="0 0 16 16"><rect width="16" height="16" fill="#4aaa50"/><text x="1.4" y="12.6" font-family="Liberation Sans" font-size="12" font-weight="bold" fill="#fff">S</text><text x="9.6" y="8" font-family="Liberation Sans" font-size="7" font-weight="bold" fill="#fff">3</text></svg>
<svg style="left:1307px;top:96px" width="16" height="16" viewBox="0 0 16 16"><circle cx="8" cy="8" r="8" fill="#3a72b4"/><rect x="6.9" y="6.6" width="2.2" height="6.2" fill="#fff"/><circle cx="8" cy="4" r="1.4" fill="#fff"/></svg>
<svg style="left:1309px;top:120px" width="12" height="16" viewBox="0 0 12 16"><path d="M0.6 0.6 H7.6 L11.4 4.4 V15.4 H0.6 Z" fill="#fdfdfd" stroke="#3a72b4" stroke-width="1.1"/><path d="M7.6 0.6 V4.4 H11.4" fill="none" stroke="#3a72b4" stroke-width="1"/><path d="M2.6 6.6 H9.4 M2.6 8.8 H9.4 M2.6 11 H9.4 M2.6 13.2 H9.4" stroke="#3a72b4" stroke-width="1"/></svg>
<svg style="left:1307px;top:144px" width="16" height="16" viewBox="0 0 16 16"><path d="M8 8 L15.6 8" stroke="#4285f4" stroke-width="2.8"/><path d="M13.2 3.3 A6.6 6.6 0 0 0 2.2 4.9" fill="none" stroke="#ea4335" stroke-width="2.8"/><path d="M2.2 4.9 A6.6 6.6 0 0 0 2.2 11.1" fill="none" stroke="#fbbc05" stroke-width="2.8"/><path d="M2.2 11.1 A6.6 6.6 0 0 0 12.6 12.8" fill="none" stroke="#34a853" stroke-width="2.8"/><path d="M12.6 12.8 A6.6 6.6 0 0 0 14.6 8" fill="none" stroke="#4285f4" stroke-width="2.8"/></svg>
<svg style="left:12px;top:190px" width="16" height="16" viewBox="0 0 16 16"><g><circle cx="8" cy="8" r="7.2" fill="#fdfdfd" stroke="#2a74bc" stroke-width="1.5"/><path d="M3.2 8 L7.8 3.8 L8.8 4.8 L6.6 7.2 H12.8 V8.8 H6.6 L8.8 11.2 L7.8 12.2 Z" fill="#2a74bc"/></g></svg>
<svg style="left:35px;top:190px" width="16" height="16" viewBox="0 0 16 16"><g transform="translate(16,0) scale(-1,1)"><circle cx="8" cy="8" r="7.2" fill="#fdfdfd" stroke="#a6a6a6" stroke-width="1.5"/><path d="M3.2 8 L7.8 3.8 L8.8 4.8 L6.6 7.2 H12.8 V8.8 H6.6 L8.8 11.2 L7.8 12.2 Z" fill="#a6a6a6"/></g></svg>
<svg style="left:21px;top:219px" width="16" height="16" viewBox="0 0 16 16"><circle cx="8" cy="8" r="8" fill="#9b9b9b"/><circle cx="5.4" cy="5.8" r="1" fill="#6a6a6a"/><circle cx="10.6" cy="5.8" r="1" fill="#6a6a6a"/><path d="M4 9.6 Q8 13.4 12 9.6" fill="none" stroke="#6a6a6a" stroke-width="1.1"/></svg>
<svg style="left:488px;top:395px" width="19" height="19" viewBox="0 0 19 19"><rect x="0.5" y="0.5" width="18" height="18" rx="2.5" fill="#fdfdfd" stroke="#2488cc"/><rect x="2.5" y="13" width="6" height="3.6" fill="#cfcfcf"/><path d="M2.4 1.6 H7.2 L9.6 4 V13 H2.4 Z" fill="#fdfdfd" stroke="#8a8a8a" stroke-width="0.9"/><path d="M3.6 4.4 H5.8 M3.6 6.4 H5.8 M3.6 8.4 H5.8 M3.6 10.4 H5.8" fill="none" stroke="#3a72b4" stroke-width="0.9"/><path d="M7.6 5.4 H13.4 L16.6 8.6 V17 H7.6 Z" fill="#fdfdfd" stroke="#666" stroke-width="1.2"/><path d="M13.4 5.4 V8.6 H16.6" fill="none" stroke="#666" stroke-width="1"/><path d="M9.4 9.4 H11.8 M9.4 11.4 H11.8 M9.4 13.4 H15 M9.4 15.4 H15" fill="none" stroke="#3a72b4" stroke-width="0.9"/></svg>
<svg style="left:475px;top:417px" width="33" height="21" viewBox="0 0 33 21"><rect x="0.5" y="0.5" width="32" height="20" rx="2.5" fill="#fdfdfd" stroke="#2488cc"/><path d="M17.5 0.5 V20.5" stroke="#2488cc"/><rect x="2.4" y="15" width="13.4" height="3.8" fill="#cfcfcf"/><rect x="19.4" y="15" width="11.4" height="3.8" fill="#cfcfcf"/><path d="M8.8 18 Q3.2 10.4 3.2 7.4 Q3.2 2.2 8.8 2.2 Q14.4 2.2 14.4 7.4 Q14.4 10.4 8.8 18 Z" fill="#cc4428"/><circle cx="8.8" cy="7.2" r="2" fill="#fdfdfd"/><path d="M21.4 8.4 L24.8 12 L28.2 8.4" fill="none" stroke="#1a84cc" stroke-width="1.5"/></svg>
<svg style="left:488px;top:572px" width="18" height="16" viewBox="0 0 18 16"><rect x="0.5" y="1.5" width="17" height="14" rx="2" fill="#fdfdfd" stroke="#1f84c8"/><path d="M2 6.4 L9 11.6 L16 6.4 V14.4 H2 Z" fill="#fdfdfd" stroke="#777" stroke-width="1"/><path d="M2.2 14.2 L7.4 10.4 M15.8 14.2 L10.6 10.4" stroke="#777" stroke-width="0.9"/><circle cx="9" cy="4.6" r="3.8" fill="#f2a860"/><rect x="6.6" y="4" width="4.8" height="1.3" fill="#fdfdfd"/><path d="M9.4 14.2 L15.4 8.6" stroke="#3a72b4" stroke-width="2.6"/></svg>
<svg style="left:488px;top:594px" width="18" height="16" viewBox="0 0 18 16"><rect x="0" y="0" width="18" height="16" rx="3" fill="#c23a2c"/><rect x="0.5" y="0.5" width="17" height="15" rx="2.5" fill="none" stroke="#a83226"/><text x="9" y="6.8" font-family="Liberation Sans" font-size="6.5" font-weight="bold" fill="#fff" text-anchor="middle" letter-spacing="-0.4">You</text><rect x="3" y="7.6" width="12" height="6.6" rx="2.2" fill="#fff"/><text x="9" y="13" font-family="Liberation Sans" font-size="5.8" font-weight="bold" fill="#c23a2c" text-anchor="middle" letter-spacing="-0.5">Tube</text></svg>
<svg style="left:452px;top:725px" width="18" height="16" viewBox="0 0 18 16"><rect x="0.5" y="1.5" width="17" height="14" rx="2" fill="#fdfdfd" stroke="#1f84c8"/><rect x="7" y="11.4" width="9" height="2.6" fill="#cdcdcd"/><circle cx="10.8" cy="6.2" r="5" fill="#fdfdfd" stroke="#3a72b4" stroke-width="1.8"/><path d="M7 10 L2 15" stroke="#3a72b4" stroke-width="2.6"/></svg>
<svg style="left:472px;top:725px" width="18" height="16" viewBox="0 0 18 16"><rect x="0.5" y="1.5" width="17" height="14" rx="2" fill="#fbfbfb" stroke="#a8cbea"/><circle cx="11.4" cy="4.2" r="3.2" fill="#aaa"/><path d="M8.4 4.6 Q7.6 9 9 10 L14.6 11 Q16 8 14.6 3.4 Z" fill="#aaa"/><path d="M9.6 4 Q11.4 5.2 13.4 4 V6.4 Q11.6 8.4 9.6 6.4 Z" fill="#fbfbfb"/><path d="M13 10 Q16.6 10.4 16.4 12.6 L13 12.6 Z" fill="#999"/><path d="M1.2 15.4 V13.2 Q1.6 11.4 4 11 L6.2 12.8 L8.4 11 Q10.8 11.4 11.2 13.2 V15.4 Z" fill="#a2a2a2"/><path d="M3.8 5.6 Q3.8 3.6 6.2 3.6 Q8.6 3.6 8.6 5.6 V7.8 Q8.4 10.2 6.2 10.2 Q4 10.2 3.8 7.8 Z" fill="#fbfbfb" stroke="#a2a2a2" stroke-width="1.1"/></svg>
<svg style="left:492px;top:725px" width="18" height="16" viewBox="0 0 18 16"><rect x="0.5" y="1.5" width="17" height="14" rx="2" fill="#fbfbfb" stroke="#a8cbea"/><path d="M2 1.6 L5.6 1.2 L7.6 3.6 L10.4 1.8 L17 7.8 L9.6 15.6 L3 9 L5 6.4 Z" fill="#a6a6a6"/><path d="M5.4 8.6 L11.6 3.2" stroke="#d8d8d8" stroke-width="0.9"/><rect x="2.6" y="0.4" width="2.4" height="1.2" fill="#a9a5c8"/></svg>
<svg style="left:535px;top:334px" width="12" height="11" viewBox="0 0 12 11"><path d="M6 0 V5.6 M0.6 4 L6 5.6 M11.4 4 L6 5.6 M2.6 10.6 L6 5.6 M9.4 10.6 L6 5.6" stroke="#3a72b4" stroke-width="2.7" fill="none"/></svg>
<svg style="left:251px;top:104px" width="13" height="19" viewBox="0 0 13 19"><path d="M0.8 0.8 V15 L4.2 11.8 L6.8 17.8 L9.2 16.8 L6.6 11 H11.4 Z" fill="#fdfdfd" stroke="#10143a" stroke-width="1.1"/></svg>
</div></body></html>
